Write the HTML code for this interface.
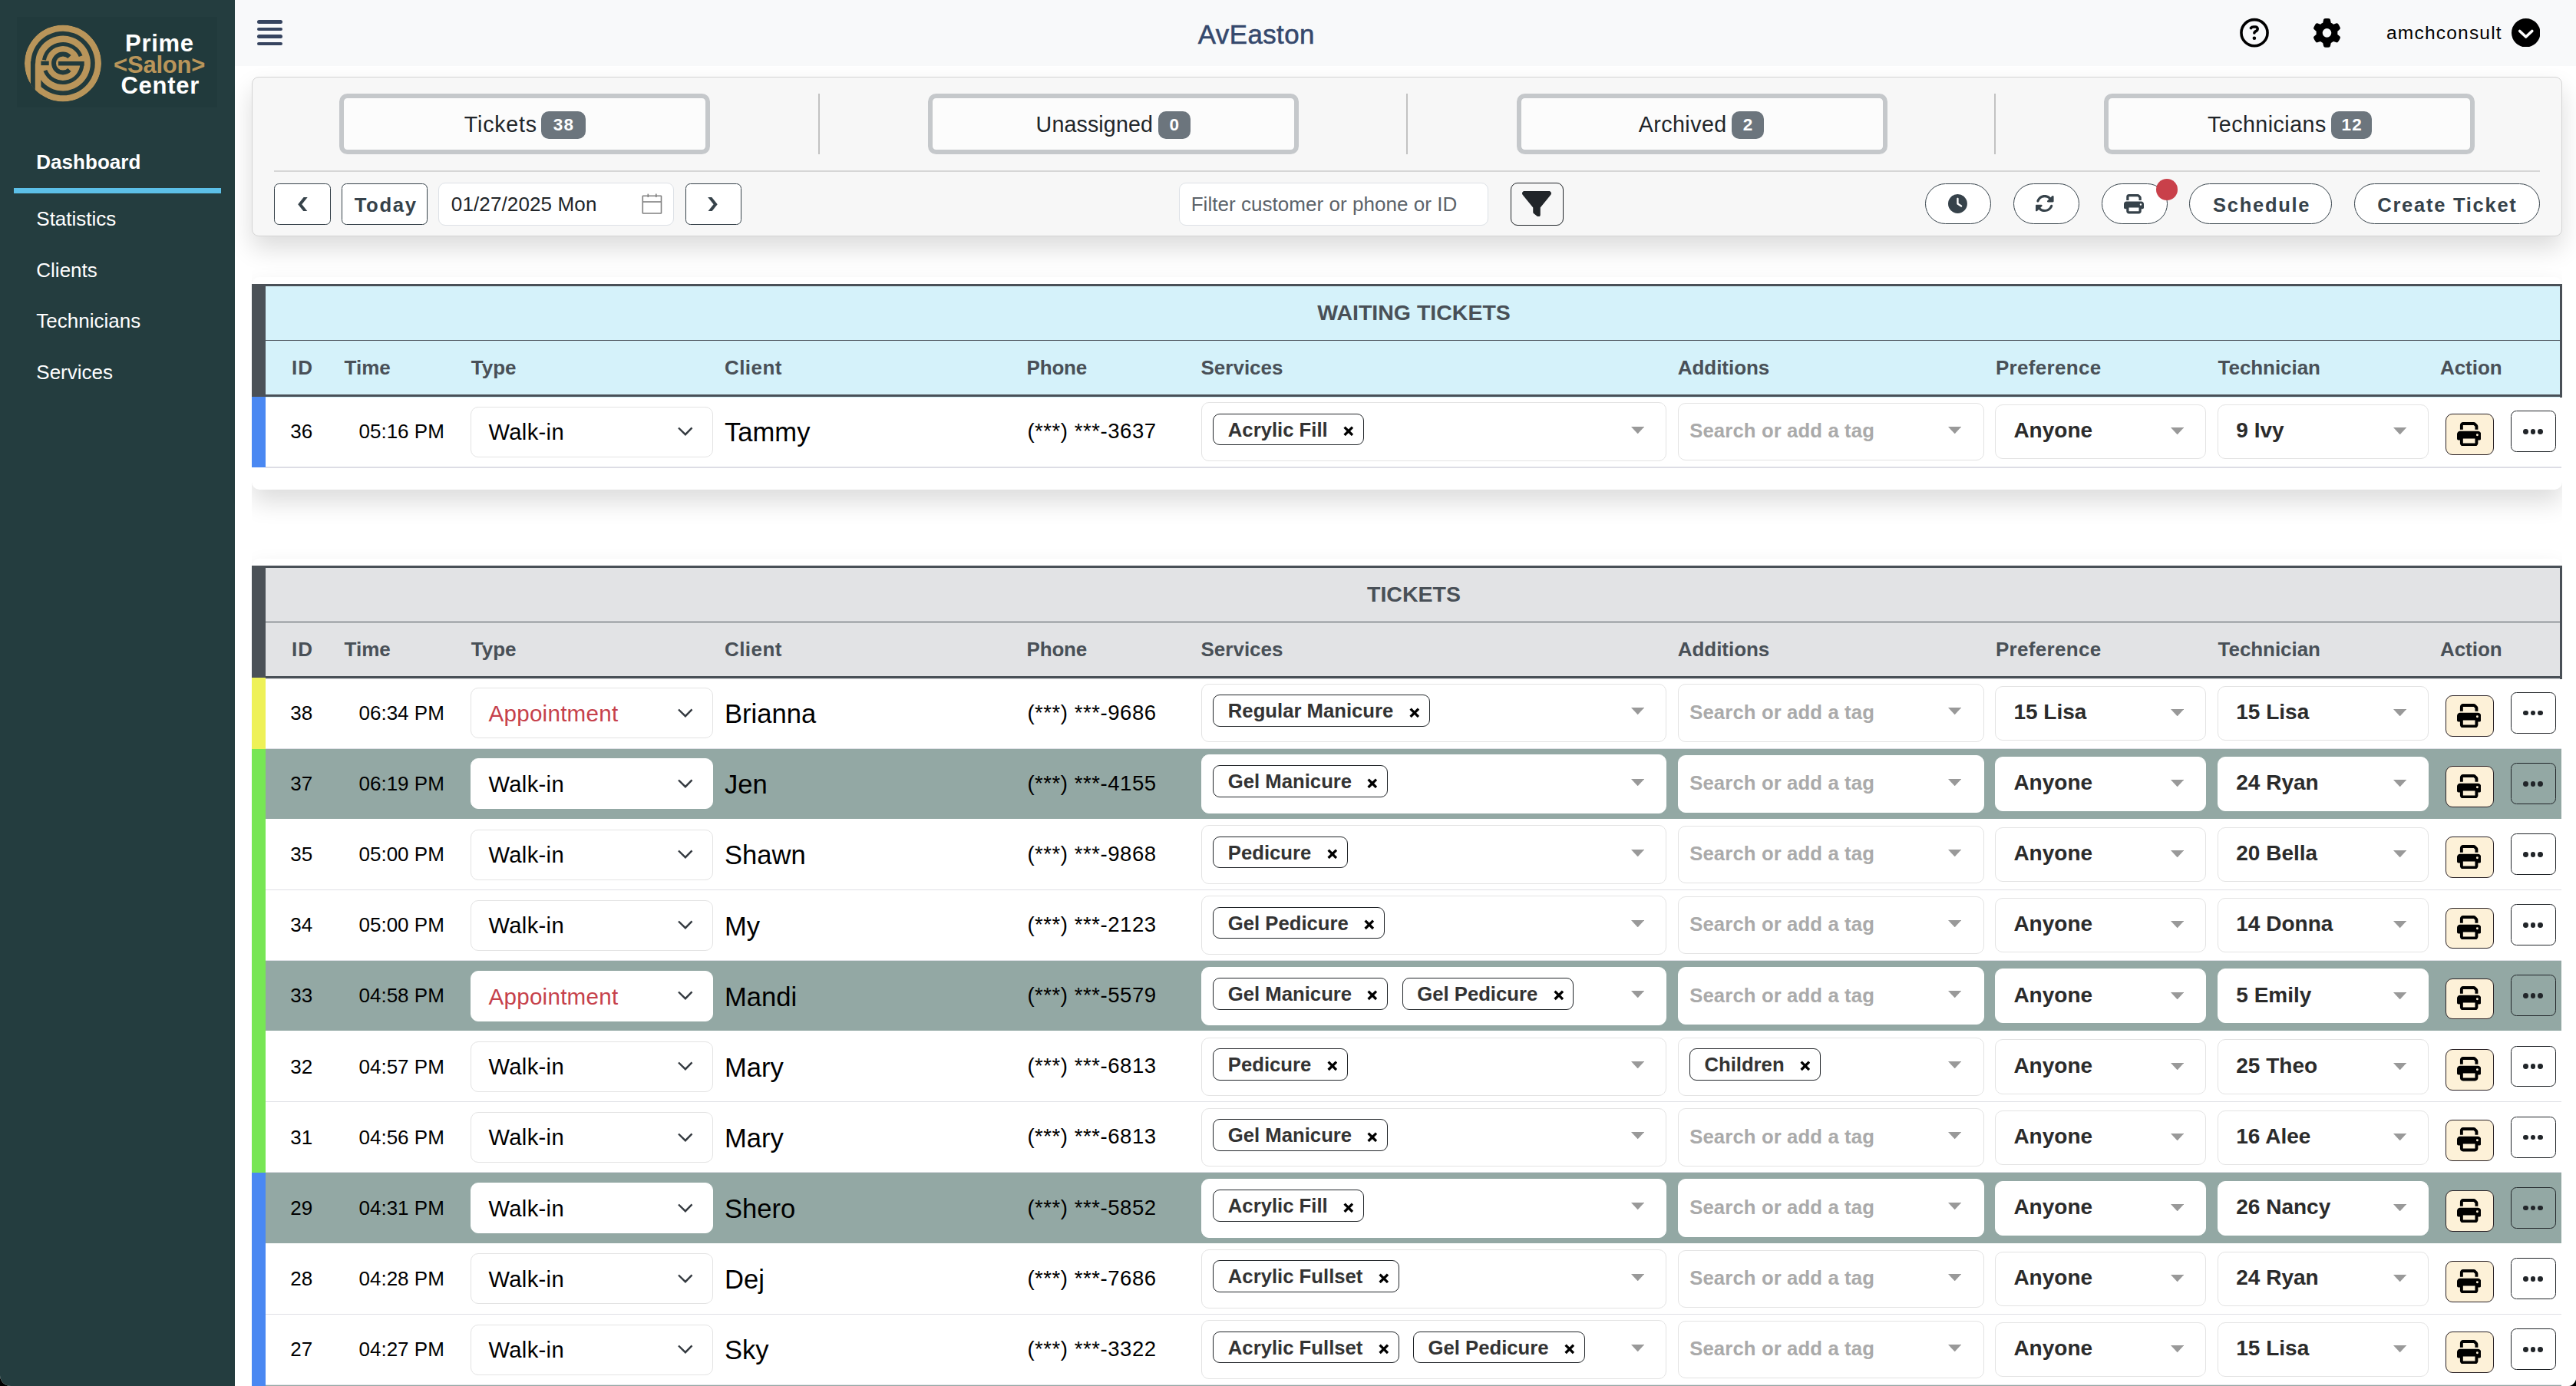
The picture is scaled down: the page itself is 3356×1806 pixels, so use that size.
<!DOCTYPE html>
<html><head><meta charset="utf-8"><title>Dashboard</title>
<style>
html,body{margin:0;padding:0;width:3356px;height:1806px;overflow:hidden;background:#000}
body{position:relative;font-family:"Liberation Sans",sans-serif}
#win div,#win svg,body>div{position:absolute}
.t{white-space:pre}
</style></head><body>
<div style="left:0;top:0;width:3356px;height:1806px;background:#000"></div>
<div style="left:0;top:0;width:3356px;height:1806px;background:#fff;border-radius:0 0 11px 14px;overflow:hidden" id="win">
<div style="left:0.00px;top:0.00px;width:306.00px;height:1806.00px;background:#243d3f"></div>
<div style="left:22.00px;top:22.00px;width:261.00px;height:118.00px;background:#213a3c"></div>
<svg style="left:0.00px;top:0.00px;" width="160.00" height="160.00" viewBox="0 0 160 160" preserveAspectRatio="none"><defs><clipPath id="lc"><circle cx="82" cy="82.5" r="50"/></clipPath></defs><g clip-path="url(#lc)"><circle cx="82" cy="82.5" r="50" fill="#b9955a"/><path d="M43.15 82.50A38.85 38.85 0 1 1 48.35 101.92" fill="none" stroke="#213a3c" stroke-width="5.9"/><rect x="39.9" y="80" width="6" height="45" fill="#213a3c"/><rect x="45.9" y="84" width="7.5" height="45" fill="#b9955a"/><path d="M57.43 78.17A24.95 24.95 0 0 1 105.13 73.15" fill="none" stroke="#213a3c" stroke-width="5.1"/><rect x="53.4" y="79.6" width="10.3" height="5.5" fill="#213a3c"/><path d="M106.89 84.24A24.95 24.95 0 0 1 58.87 91.85" fill="none" stroke="#213a3c" stroke-width="5.1"/><path d="M90.49 90.99A12.0 12.0 0 1 1 90.49 74.01" fill="none" stroke="#213a3c" stroke-width="5.9"/><rect x="76" y="80" width="33.7" height="5.5" fill="#213a3c"/></g></svg>
<div class="t" style="left:163.00px;top:40.76px;font-size:31px;line-height:31px;color:#ffffff;font-weight:700;letter-spacing:0.700px;">Prime</div>
<div class="t" style="left:148.00px;top:68.76px;font-size:31px;line-height:31px;color:#b9955a;font-weight:700;letter-spacing:-0.200px;">&lt;Salon&gt;</div>
<div class="t" style="left:157.50px;top:95.76px;font-size:31px;line-height:31px;color:#ffffff;font-weight:700;letter-spacing:0.700px;">Center</div>
<div class="t" style="left:47.30px;top:197.99px;font-size:26px;line-height:26px;color:#ffffff;font-weight:700;letter-spacing:0.033px;">Dashboard</div>
<div style="left:18.00px;top:245.00px;width:270.00px;height:7.00px;background:#5cc0e8"></div>
<div class="t" style="left:47.30px;top:271.99px;font-size:26px;line-height:26px;color:#ffffff;font-weight:400;letter-spacing:0.000px;">Statistics</div>
<div class="t" style="left:47.30px;top:338.99px;font-size:26px;line-height:26px;color:#ffffff;font-weight:400;letter-spacing:0.000px;">Clients</div>
<div class="t" style="left:47.30px;top:404.99px;font-size:26px;line-height:26px;color:#ffffff;font-weight:400;letter-spacing:0.000px;">Technicians</div>
<div class="t" style="left:47.30px;top:471.99px;font-size:26px;line-height:26px;color:#ffffff;font-weight:400;letter-spacing:0.000px;">Services</div>
<div style="left:306.00px;top:0.00px;width:3050.00px;height:86.00px;background:#f8f9fa"></div>
<div style="left:335.00px;top:26.20px;width:33.00px;height:4.70px;background:#36445f;border-radius:3px"></div>
<div style="left:335.00px;top:35.70px;width:33.00px;height:4.70px;background:#36445f;border-radius:3px"></div>
<div style="left:335.00px;top:45.10px;width:33.00px;height:4.70px;background:#36445f;border-radius:3px"></div>
<div style="left:335.00px;top:54.60px;width:33.00px;height:4.70px;background:#36445f;border-radius:3px"></div>
<div class="t" style="left:1560.80px;top:27.74px;font-size:34.8px;line-height:34.8px;color:#35486c;font-weight:400;letter-spacing:0.467px;-webkit-text-stroke:0.6px #35486c">AvEaston</div>
<svg style="left:2917.00px;top:23.00px;" width="40.00" height="40.00" viewBox="0 0 40 40" preserveAspectRatio="none"><circle cx="20" cy="19.7" r="17.05" fill="none" stroke="#000" stroke-width="3.6"/><path d="M15.4 13.6C16.2 12.5 17.5 11.95 19 11.95H21.4C23 11.95 24.2 13.2 24.2 14.8C24.2 16 23.5 16.8 22.5 17.4L21 18.2C20.3 18.6 19.9 19.2 19.9 20" fill="none" stroke="#000" stroke-width="3.6" stroke-linecap="round" stroke-linejoin="round"/><circle cx="19.9" cy="26.75" r="2.3" fill="#000"/></svg>
<svg style="left:3012.50px;top:24.00px;" width="37.00" height="37.70" viewBox="0 0 512 512" preserveAspectRatio="none"><path d="M495.9 166.6c3.2 8.7 .5 18.4-6.4 24.6l-43.3 39.4c1.1 8.3 1.7 16.8 1.7 25.4s-.6 17.1-1.7 25.4l43.3 39.4c6.9 6.2 9.6 15.9 6.4 24.6c-4.4 11.9-9.7 23.3-15.8 34.3l-4.7 8.1c-6.6 11-14 21.4-22.1 31.2c-5.9 7.2-15.7 9.6-24.5 6.8l-55.7-17.700c-13.4 10.3-28.2 18.9-44 25.4l-12.5 57.1c-2 9.1-9 16.3-18.2 17.8c-13.8 2.3-28 3.5-42.5 3.5s-28.7-1.2-42.5-3.5c-9.2-1.5-16.2-8.7-18.2-17.8l-12.5-57.1c-15.8-6.5-30.6-15.1-44-25.4L83.1 425.9c-8.8 2.8-18.6 .3-24.5-6.8c-8.1-9.8-15.5-20.2-22.1-31.2l-4.7-8.1c-6.1-11-11.4-22.4-15.8-34.3c-3.2-8.7-.5-18.4 6.4-24.6l43.3-39.4C64.6 273.1 64 264.6 64 256s.6-17.1 1.7-25.4L22.4 191.2c-6.9-6.2-9.6-15.9-6.4-24.6c4.4-11.9 9.7-23.3 15.8-34.3l4.7-8.1c6.6-11 14-21.4 22.1-31.2c5.9-7.2 15.7-9.6 24.5-6.8l55.7 17.7c13.4-10.3 28.2-18.9 44-25.4l12.5-57.1c2-9.1 9-16.3 18.2-17.8C227.3 1.2 241.5 0 256 0s28.7 1.2 42.5 3.5c9.2 1.5 16.2 8.7 18.2 17.8l12.5 57.1c15.8 6.5 30.6 15.1 44 25.4l55.7-17.7c8.8-2.8 18.6-.3 24.5 6.8c8.1 9.8 15.5 20.2 22.1 31.2l4.7 8.1c6.1 11 11.4 22.4 15.8 34.3zM256 336a80 80 0 1 0 0-160 80 80 0 1 0 0 160z" fill="#000"/></svg>
<div class="t" style="left:3109.00px;top:31.46px;font-size:24.5px;line-height:24.5px;color:#000000;font-weight:400;letter-spacing:1.211px;">amchconsult</div>
<svg style="left:3271.90px;top:23.90px;" width="37.50" height="37.50" viewBox="0 0 37.5 37.5" preserveAspectRatio="none"><circle cx="18.75" cy="18.75" r="18.75" fill="#000"/><path d="M10.7 16.5L18.7 24L26.8 16.5" fill="none" stroke="#fff" stroke-width="3.6" stroke-linecap="round" stroke-linejoin="round"/></svg>
<div style="left:328.00px;top:100.00px;width:3010.00px;height:208.00px;background:#f7f7f7;border:1.5px solid #d4d4d4;border-radius:9px;box-sizing:border-box;box-shadow:0 16px 32px rgba(0,0,0,.14)"></div>
<div style="left:442.00px;top:122.00px;width:483.00px;height:79.00px;background:#fcfcfc;border:6.8px solid #c5c8cb;border-radius:10.5px;box-sizing:border-box"></div>
<div class="t" style="left:604.80px;top:148.09px;font-size:28.6px;line-height:28.6px;color:#212529;font-weight:400;letter-spacing:0.798px;">Tickets</div>
<div style="left:705.00px;top:145.00px;width:58.00px;height:36.00px;background:#6c757d;border-radius:10px"></div>
<div class="t" style="left:-265.50px;width:2000px;text-align:center;top:151.85px;font-size:22.5px;line-height:22.5px;color:#ffffff;font-weight:700;letter-spacing:1.200px;">38</div>
<div style="left:1209.00px;top:122.00px;width:483.00px;height:79.00px;background:#fcfcfc;border:6.8px solid #c5c8cb;border-radius:10.5px;box-sizing:border-box"></div>
<div class="t" style="left:1349.60px;top:148.09px;font-size:28.6px;line-height:28.6px;color:#212529;font-weight:400;letter-spacing:0.141px;">Unassigned</div>
<div style="left:1508.90px;top:145.00px;width:42.00px;height:36.00px;background:#6c757d;border-radius:10px"></div>
<div class="t" style="left:530.40px;width:2000px;text-align:center;top:151.85px;font-size:22.5px;line-height:22.5px;color:#ffffff;font-weight:700;letter-spacing:1.200px;">0</div>
<div style="left:1975.50px;top:122.00px;width:483.00px;height:79.00px;background:#fcfcfc;border:6.8px solid #c5c8cb;border-radius:10.5px;box-sizing:border-box"></div>
<div class="t" style="left:2134.70px;top:148.09px;font-size:28.6px;line-height:28.6px;color:#212529;font-weight:400;letter-spacing:0.463px;">Archived</div>
<div style="left:2256.00px;top:145.00px;width:42.00px;height:36.00px;background:#6c757d;border-radius:10px"></div>
<div class="t" style="left:1277.50px;width:2000px;text-align:center;top:151.85px;font-size:22.5px;line-height:22.5px;color:#ffffff;font-weight:700;letter-spacing:1.200px;">2</div>
<div style="left:2741.00px;top:122.00px;width:483.00px;height:79.00px;background:#fcfcfc;border:6.8px solid #c5c8cb;border-radius:10.5px;box-sizing:border-box"></div>
<div class="t" style="left:2876.00px;top:148.09px;font-size:28.6px;line-height:28.6px;color:#212529;font-weight:400;letter-spacing:0.488px;">Technicians</div>
<div style="left:3037.20px;top:145.00px;width:53.00px;height:36.00px;background:#6c757d;border-radius:10px"></div>
<div class="t" style="left:2064.20px;width:2000px;text-align:center;top:151.85px;font-size:22.5px;line-height:22.5px;color:#ffffff;font-weight:700;letter-spacing:1.200px;">12</div>
<div style="left:1066.00px;top:122.00px;width:2.00px;height:79.00px;background:#c2c2c2"></div>
<div style="left:1832.00px;top:122.00px;width:2.00px;height:79.00px;background:#c2c2c2"></div>
<div style="left:2598.00px;top:122.00px;width:2.00px;height:79.00px;background:#c2c2c2"></div>
<div style="left:357.00px;top:222.00px;width:2952.00px;height:1.60px;background:#d6d6d6"></div>
<div style="left:357.00px;top:239.00px;width:73.50px;height:53.50px;background:#fff;border:1.6px solid #36424a;border-radius:6.5px;box-sizing:border-box"></div>
<svg style="left:387.50px;top:256.80px;" width="13.00" height="18.50" viewBox="0 0 13 18.5" preserveAspectRatio="none"><polygon points="12.7,0 7.6,0 0.2,9.25 7.6,18.5 12.7,18.5 5.3,9.25" fill="#36424a"/></svg>
<div style="left:445.00px;top:239.00px;width:111.50px;height:53.50px;background:#fff;border:1.6px solid #36424a;border-radius:6.5px;box-sizing:border-box"></div>
<div class="t" style="left:461.70px;top:254.74px;font-size:25.7px;line-height:25.7px;color:#36424a;font-weight:700;letter-spacing:1.651px;">Today</div>
<div style="left:571.00px;top:238.00px;width:306.50px;height:56.00px;background:#fff;border:1.5px solid #dde1e6;border-radius:9px;box-sizing:border-box"></div>
<div class="t" style="left:587.80px;top:253.19px;font-size:26px;line-height:26px;color:#212529;font-weight:400;letter-spacing:0.126px;">01/27/2025 Mon</div>
<svg style="left:836.00px;top:252.00px;" width="27.00" height="27.00" viewBox="0 0 27 27" preserveAspectRatio="none"><rect x="1.3" y="3.3" width="24.2" height="22.7" fill="none" stroke="#808080" stroke-width="1.6" rx="0.5"/><line x1="1.3" y1="11" x2="25.5" y2="11" stroke="#808080" stroke-width="1.6"/><line x1="8.3" y1="0.6" x2="8.3" y2="5" stroke="#808080" stroke-width="1.6"/><line x1="18.8" y1="0.6" x2="18.8" y2="5" stroke="#808080" stroke-width="1.6"/></svg>
<div style="left:893.00px;top:239.00px;width:73.00px;height:53.50px;background:#fff;border:1.6px solid #36424a;border-radius:6.5px;box-sizing:border-box"></div>
<svg style="left:922.00px;top:256.80px;" width="13.00" height="18.50" viewBox="0 0 13 18.5" preserveAspectRatio="none"><polygon points="0.2,0 5.3,0 12.7,9.25 5.3,18.5 0.2,18.5 7.6,9.25" fill="#36424a"/></svg>
<div style="left:1535.70px;top:238.00px;width:403.00px;height:56.00px;background:#fff;border:1.5px solid #dde1e6;border-radius:9px;box-sizing:border-box"></div>
<div class="t" style="left:1551.70px;top:252.69px;font-size:26px;line-height:26px;color:#5c636a;font-weight:400;letter-spacing:0.042px;">Filter customer or phone or ID</div>
<div style="left:1968.00px;top:238.20px;width:68.80px;height:55.50px;border:1.8px solid #212529;border-radius:9px;box-sizing:border-box"></div>
<svg style="left:1983.00px;top:249.00px;" width="38.00" height="33.40" viewBox="0 32 512 448" preserveAspectRatio="none"><path d="M3.9 54.9C10.5 40.9 24.5 32 40 32H472c15.5 0 29.5 8.9 36.1 22.9s4.6 30.5-5.2 42.5L320 320.9V448c0 12.1-6.8 23.2-17.7 28.6s-23.8 4.3-33.5-3l-64-48c-8.1-6-12.8-15.5-12.8-25.6V320.9L9 97.3C-.7 85.4-2.8 68.8 3.9 54.9z" fill="#212529"/></svg>
<div style="left:2508.00px;top:239.00px;width:86.00px;height:53.40px;background:#fff;border:1.5px solid #36424a;border-radius:27px;box-sizing:border-box"></div>
<svg style="left:2537.90px;top:252.90px;" width="24.90" height="24.90" viewBox="0 0 512 512" preserveAspectRatio="none"><path d="M256 0a256 256 0 1 1 0 512A256 256 0 1 1 256 0zM232 120V256c0 8 4 15.5 10.7 20l96 64c11 7.4 25.9 4.4 33.3-6.7s4.4-25.9-6.7-33.3L280 243.2V120c0-13.3-10.7-24-24-24s-24 10.7-24 24z" fill="#36424a"/></svg>
<div style="left:2623.00px;top:239.00px;width:85.70px;height:53.40px;background:#fff;border:1.5px solid #36424a;border-radius:27px;box-sizing:border-box"></div>
<svg style="left:2652.40px;top:254.40px;" width="23.60" height="22.20" viewBox="16 30 480 452" preserveAspectRatio="none"><path d="M142.9 142.9c62.2-62.2 162.7-62.5 225.3-1L327 183c-6.9 6.9-8.9 17.2-5.2 26.2s12.5 14.8 22.200 14.8H463.5c0 0 0 0 0 0H472c13.3 0 24-10.7 24-24V72c0-9.7-5.8-18.5-14.8-22.2s-19.3-1.7-26.2 5.2L413.4 96.6c-87.6-86.5-228.7-86.2-315.8 1C73.2 122 55.6 150.7 44.8 181.4c-5.9 16.7 2.9 34.9 19.5 40.8s34.9-2.9 40.8-19.5c7.7-21.800 20.2-42.3 37.8-59.8zM16 312v7.6 .7V440c0 9.7 5.8 18.5 14.8 22.2s19.3 1.7 26.2-5.2l41.6-41.6c87.6 86.5 228.7 86.2 315.8-1c24.4-24.4 42.1-53.1 52.9-83.7c5.9-16.7-2.9-34.9-19.5-40.8s-34.9 2.9-40.8 19.5c-7.7 21.8-20.2 42.3-37.8 59.8c-62.2 62.2-162.7 62.5-225.3 1L185 329c6.9-6.9 8.9-17.2 5.2-26.2s-12.5-14.8-22.2-14.8H48.4h-.7H40c-13.3 0-24 10.7-24 24z" fill="#36424a"/></svg>
<div style="left:2738.00px;top:239.00px;width:86.00px;height:53.40px;background:#fff;border:1.5px solid #36424a;border-radius:27px;box-sizing:border-box"></div>
<svg style="left:2767.00px;top:253.00px;" width="26.00" height="25.50" viewBox="0 0 512 512" preserveAspectRatio="none"><path d="M128 0C92.7 0 64 28.7 64 64v96h64V64H354.7L384 93.3V160h64V93.3c0-17-6.7-33.3-18.7-45.3L400 18.7C388 6.7 371.7 0 354.7 0H128zM384 352v32 64H128V384 368 352H384zm64 32h32c17.7 0 32-14.3 32-32V256c0-35.3-28.7-64-64-64H64c-35.3 0-64 28.7-64 64v96c0 17.7 14.3 32 32 32H64v64c0 35.3 28.7 64 64 64H384c35.3 0 64-28.7 64-64V384zM432 248a24 24 0 1 1 0 48 24 24 0 1 1 0-48z" fill="#36424a"/></svg>
<div style="left:2808.6px;top:232.7px;width:28.6px;height:28.6px;border-radius:50%;background:#c9404a"></div>
<div style="left:2852.00px;top:239.00px;width:186.00px;height:53.40px;background:#fff;border:1.5px solid #36424a;border-radius:27px;box-sizing:border-box"></div>
<div class="t" style="left:2883.00px;top:254.91px;font-size:25.5px;line-height:25.5px;color:#36424a;font-weight:700;letter-spacing:1.738px;">Schedule</div>
<div style="left:3066.90px;top:239.00px;width:242.10px;height:53.40px;background:#fff;border:1.5px solid #36424a;border-radius:27px;box-sizing:border-box"></div>
<div class="t" style="left:3097.30px;top:254.61px;font-size:25.5px;line-height:25.5px;color:#36424a;font-weight:700;letter-spacing:1.736px;">Create Ticket</div>
<div style="left:328.00px;top:361.00px;width:3010.00px;height:277.00px;background:#fff;border-radius:10px;box-shadow:0 16px 32px rgba(0,0,0,.14)"></div>
<div style="left:328.00px;top:370.00px;width:3010.00px;height:147.50px;background:#d5f2fa"></div>
<div style="left:328.00px;top:370.00px;width:3010.00px;height:3.20px;background:#495057"></div>
<div style="left:346.00px;top:442.80px;width:2992.00px;height:1.20px;background:#495057"></div>
<div style="left:328.00px;top:513.90px;width:3010.00px;height:3.00px;background:#495057"></div>
<div style="left:328.00px;top:370.00px;width:18.00px;height:147.50px;background:#4b5157"></div>
<div style="left:3335.00px;top:370.00px;width:3.00px;height:147.50px;background:#495057"></div>
<div class="t" style="left:842.00px;width:2000px;text-align:center;top:393.37px;font-size:28.5px;line-height:28.5px;color:#495057;font-weight:700;letter-spacing:0.000px;">WAITING TICKETS</div>
<div class="t" style="left:380.00px;top:465.89px;font-size:26px;line-height:26px;color:#495057;font-weight:700;letter-spacing:1.080px;">ID</div>
<div class="t" style="left:448.60px;top:465.89px;font-size:26px;line-height:26px;color:#495057;font-weight:700;letter-spacing:0.000px;">Time</div>
<div class="t" style="left:613.80px;top:465.89px;font-size:26px;line-height:26px;color:#495057;font-weight:700;letter-spacing:0.000px;">Type</div>
<div class="t" style="left:944.00px;top:465.89px;font-size:26px;line-height:26px;color:#495057;font-weight:700;letter-spacing:0.429px;">Client</div>
<div class="t" style="left:1337.60px;top:465.89px;font-size:26px;line-height:26px;color:#495057;font-weight:700;letter-spacing:-0.193px;">Phone</div>
<div class="t" style="left:1564.50px;top:465.89px;font-size:26px;line-height:26px;color:#495057;font-weight:700;letter-spacing:0.000px;">Services</div>
<div class="t" style="left:2185.80px;top:465.89px;font-size:26px;line-height:26px;color:#495057;font-weight:700;letter-spacing:-0.049px;">Additions</div>
<div class="t" style="left:2599.90px;top:465.89px;font-size:26px;line-height:26px;color:#495057;font-weight:700;letter-spacing:0.329px;">Preference</div>
<div class="t" style="left:2889.60px;top:465.89px;font-size:26px;line-height:26px;color:#495057;font-weight:700;letter-spacing:-0.057px;">Technician</div>
<div class="t" style="left:3178.90px;top:465.89px;font-size:26px;line-height:26px;color:#495057;font-weight:700;letter-spacing:-0.022px;">Action</div>
<div style="left:346.00px;top:608.00px;width:2991.00px;height:1.00px;background:#dfe0e6"></div>
<div style="left:328.00px;top:517.20px;width:18.00px;height:91.60px;background:#4a88f2"></div>
<div class="t" style="left:378.30px;top:549.09px;font-size:26px;line-height:26px;color:#000;font-weight:400;letter-spacing:0.000px;">36</div>
<div class="t" style="left:467.50px;top:549.09px;font-size:26px;line-height:26px;color:#000;font-weight:400;letter-spacing:0.000px;">05:16 PM</div>
<div style="left:613.00px;top:529.50px;width:316.00px;height:66.00px;background:#fff;border:1.5px solid #e3e3e3;border-radius:10px;box-sizing:border-box"></div>
<div class="t" style="left:636.50px;top:548.78px;font-size:29.2px;line-height:29.2px;color:#000;font-weight:400;letter-spacing:0.320px;">Walk-in</div>
<svg style="left:882.60px;top:556.00px;" width="20.00" height="12.00" viewBox="0 0 20 12" preserveAspectRatio="none"><path d="M1 1.5L9.9 10.2L18.5 1.3" fill="none" stroke="#343a40" stroke-width="2.4"/></svg>
<div class="t" style="left:944.00px;top:546.41px;font-size:34.6px;line-height:34.6px;color:#000;font-weight:400;letter-spacing:0.000px;">Tammy</div>
<div class="t" style="left:1338.40px;top:547.82px;font-size:27.5px;line-height:27.5px;color:#000;font-weight:400;letter-spacing:0.553px;">(***) ***-3637</div>
<div style="left:1565.40px;top:524.20px;width:605.40px;height:76.60px;background:#fff;border:1.5px solid #e3e3e3;border-radius:10px;box-sizing:border-box"></div>
<div style="left:1580.40px;top:538.50px;width:196.52px;height:41.80px;background:#fff;border:1.5px solid #212529;border-radius:9px;box-sizing:border-box"></div>
<div class="t" style="left:1599.80px;top:547.54px;font-size:25.7px;line-height:25.7px;color:#333333;font-weight:700;letter-spacing:0.000px;">Acrylic Fill</div>
<svg style="left:1750.02px;top:554.90px;" width="13.60" height="13.60" viewBox="0 0 13.6 13.6" preserveAspectRatio="none"><path d="M1.6 1.6L12 12M12 1.6L1.6 12" stroke="#000" stroke-width="3.3" stroke-linecap="butt"/></svg>
<svg style="left:2124.70px;top:555.70px;" width="17.30" height="9.30" viewBox="0 0 17.3 9.3" preserveAspectRatio="none"><polygon points="0,0 17.3,0 8.65,9.3" fill="#999"/></svg>
<div style="left:2185.60px;top:524.70px;width:399.00px;height:75.40px;background:#fff;border:1.5px solid #e3e3e3;border-radius:10px;box-sizing:border-box"></div>
<div class="t" style="left:2201.20px;top:549.24px;font-size:25.7px;line-height:25.7px;color:#aaaaaa;font-weight:700;letter-spacing:0.125px;">Search or add a tag</div>
<svg style="left:2537.80px;top:555.70px;" width="17.30" height="9.30" viewBox="0 0 17.3 9.3" preserveAspectRatio="none"><polygon points="0,0 17.3,0 8.65,9.3" fill="#999"/></svg>
<div style="left:2599.30px;top:526.90px;width:274.30px;height:71.20px;background:#fff;border:1.5px solid #e3e3e3;border-radius:10px;box-sizing:border-box"></div>
<div class="t" style="left:2623.40px;top:547.30px;font-size:28px;line-height:28px;color:#2b2b2b;font-weight:700;letter-spacing:0.000px;">Anyone</div>
<svg style="left:2828.00px;top:557.20px;" width="17.30" height="9.30" viewBox="0 0 17.3 9.3" preserveAspectRatio="none"><polygon points="0,0 17.3,0 8.65,9.3" fill="#999"/></svg>
<div style="left:2889.20px;top:526.90px;width:274.50px;height:71.20px;background:#fff;border:1.5px solid #e3e3e3;border-radius:10px;box-sizing:border-box"></div>
<div class="t" style="left:2913.30px;top:547.30px;font-size:28px;line-height:28px;color:#2b2b2b;font-weight:700;letter-spacing:0.000px;">9 Ivy</div>
<svg style="left:3117.50px;top:557.20px;" width="17.30" height="9.30" viewBox="0 0 17.3 9.3" preserveAspectRatio="none"><polygon points="0,0 17.3,0 8.65,9.3" fill="#999"/></svg>
<div style="left:3186.20px;top:539.40px;width:62.60px;height:53.80px;background:#fdf1d8;border:1.5px solid #2a2226;border-radius:9px;box-sizing:border-box"></div>
<svg style="left:3201.20px;top:549.80px;" width="31.30" height="31.40" viewBox="0 0 512 512" preserveAspectRatio="none"><path d="M128 0C92.7 0 64 28.7 64 64v96h64V64H354.7L384 93.3V160h64V93.3c0-17-6.7-33.3-18.7-45.3L400 18.7C388 6.7 371.7 0 354.7 0H128zM384 352v32 64H128V384 368 352H384zm64 32h32c17.7 0 32-14.3 32-32V256c0-35.3-28.7-64-64-64H64c-35.3 0-64 28.7-64 64v96c0 17.7 14.3 32 32 32H64v64c0 35.3 28.7 64 64 64H384c35.3 0 64-28.7 64-64V384zM432 248a24 24 0 1 1 0 48 24 24 0 1 1 0-48z" fill="#000"/></svg>
<div style="left:3271.20px;top:535.10px;width:58.60px;height:53.90px;background:#fff;border:1.7px solid #212529;border-radius:7.5px;box-sizing:border-box"></div>
<div style="left:3286.80px;top:558.90px;width:6.8px;height:6.8px;border-radius:50%;background:#212529"></div>
<div style="left:3296.60px;top:558.90px;width:6.8px;height:6.8px;border-radius:50%;background:#212529"></div>
<div style="left:3306.40px;top:558.90px;width:6.8px;height:6.8px;border-radius:50%;background:#212529"></div>
<div style="left:346.00px;top:609.00px;width:2991.00px;height:1.00px;background:#dcdce4"></div>
<div style="left:328.00px;top:727.50px;width:3010.00px;height:1200.00px;background:#fff;border-radius:10px;box-shadow:0 16px 32px rgba(0,0,0,.14)"></div>
<div style="left:328.00px;top:737.00px;width:3010.00px;height:147.50px;background:#e2e3e5"></div>
<div style="left:328.00px;top:737.00px;width:3010.00px;height:3.20px;background:#495057"></div>
<div style="left:346.00px;top:809.80px;width:2992.00px;height:1.20px;background:#495057"></div>
<div style="left:328.00px;top:880.90px;width:3010.00px;height:3.00px;background:#495057"></div>
<div style="left:328.00px;top:737.00px;width:18.00px;height:147.50px;background:#4b5157"></div>
<div style="left:3335.00px;top:737.00px;width:3.00px;height:147.50px;background:#495057"></div>
<div class="t" style="left:842.00px;width:2000px;text-align:center;top:760.37px;font-size:28.5px;line-height:28.5px;color:#495057;font-weight:700;letter-spacing:0.000px;">TICKETS</div>
<div class="t" style="left:380.00px;top:832.89px;font-size:26px;line-height:26px;color:#495057;font-weight:700;letter-spacing:1.080px;">ID</div>
<div class="t" style="left:448.60px;top:832.89px;font-size:26px;line-height:26px;color:#495057;font-weight:700;letter-spacing:0.000px;">Time</div>
<div class="t" style="left:613.80px;top:832.89px;font-size:26px;line-height:26px;color:#495057;font-weight:700;letter-spacing:0.000px;">Type</div>
<div class="t" style="left:944.00px;top:832.89px;font-size:26px;line-height:26px;color:#495057;font-weight:700;letter-spacing:0.429px;">Client</div>
<div class="t" style="left:1337.60px;top:832.89px;font-size:26px;line-height:26px;color:#495057;font-weight:700;letter-spacing:-0.193px;">Phone</div>
<div class="t" style="left:1564.50px;top:832.89px;font-size:26px;line-height:26px;color:#495057;font-weight:700;letter-spacing:0.000px;">Services</div>
<div class="t" style="left:2185.80px;top:832.89px;font-size:26px;line-height:26px;color:#495057;font-weight:700;letter-spacing:-0.049px;">Additions</div>
<div class="t" style="left:2599.90px;top:832.89px;font-size:26px;line-height:26px;color:#495057;font-weight:700;letter-spacing:0.329px;">Preference</div>
<div class="t" style="left:2889.60px;top:832.89px;font-size:26px;line-height:26px;color:#495057;font-weight:700;letter-spacing:-0.057px;">Technician</div>
<div class="t" style="left:3178.90px;top:832.89px;font-size:26px;line-height:26px;color:#495057;font-weight:700;letter-spacing:-0.022px;">Action</div>
<div style="left:346.00px;top:975.00px;width:2991.00px;height:1.00px;background:#dfe0e6"></div>
<div style="left:328.00px;top:883.40px;width:18.00px;height:92.15px;background:#eef157"></div>
<div class="t" style="left:378.30px;top:915.79px;font-size:26px;line-height:26px;color:#000;font-weight:400;letter-spacing:0.000px;">38</div>
<div class="t" style="left:467.50px;top:915.79px;font-size:26px;line-height:26px;color:#000;font-weight:400;letter-spacing:0.000px;">06:34 PM</div>
<div style="left:613.00px;top:896.20px;width:316.00px;height:66.00px;background:#fff;border:1.5px solid #e3e3e3;border-radius:10px;box-sizing:border-box"></div>
<div class="t" style="left:636.50px;top:915.14px;font-size:29.6px;line-height:29.6px;color:#c6414b;font-weight:400;letter-spacing:0.250px;">Appointment</div>
<svg style="left:882.60px;top:922.70px;" width="20.00" height="12.00" viewBox="0 0 20 12" preserveAspectRatio="none"><path d="M1 1.5L9.9 10.2L18.5 1.3" fill="none" stroke="#343a40" stroke-width="2.4"/></svg>
<div class="t" style="left:944.00px;top:913.11px;font-size:34.6px;line-height:34.6px;color:#000;font-weight:400;letter-spacing:0.000px;">Brianna</div>
<div class="t" style="left:1338.40px;top:914.52px;font-size:27.5px;line-height:27.5px;color:#000;font-weight:400;letter-spacing:0.553px;">(***) ***-9686</div>
<div style="left:1565.40px;top:890.90px;width:605.40px;height:76.60px;background:#fff;border:1.5px solid #e3e3e3;border-radius:10px;box-sizing:border-box"></div>
<div style="left:1580.40px;top:905.20px;width:282.15px;height:41.80px;background:#fff;border:1.5px solid #212529;border-radius:9px;box-sizing:border-box"></div>
<div class="t" style="left:1599.80px;top:914.24px;font-size:25.7px;line-height:25.7px;color:#333333;font-weight:700;letter-spacing:0.000px;">Regular Manicure</div>
<svg style="left:1835.65px;top:921.60px;" width="13.60" height="13.60" viewBox="0 0 13.6 13.6" preserveAspectRatio="none"><path d="M1.6 1.6L12 12M12 1.6L1.6 12" stroke="#000" stroke-width="3.3" stroke-linecap="butt"/></svg>
<svg style="left:2124.70px;top:922.40px;" width="17.30" height="9.30" viewBox="0 0 17.3 9.3" preserveAspectRatio="none"><polygon points="0,0 17.3,0 8.65,9.3" fill="#999"/></svg>
<div style="left:2185.60px;top:891.40px;width:399.00px;height:75.40px;background:#fff;border:1.5px solid #e3e3e3;border-radius:10px;box-sizing:border-box"></div>
<div class="t" style="left:2201.20px;top:915.94px;font-size:25.7px;line-height:25.7px;color:#aaaaaa;font-weight:700;letter-spacing:0.125px;">Search or add a tag</div>
<svg style="left:2537.80px;top:922.40px;" width="17.30" height="9.30" viewBox="0 0 17.3 9.3" preserveAspectRatio="none"><polygon points="0,0 17.3,0 8.65,9.3" fill="#999"/></svg>
<div style="left:2599.30px;top:893.60px;width:274.30px;height:71.20px;background:#fff;border:1.5px solid #e3e3e3;border-radius:10px;box-sizing:border-box"></div>
<div class="t" style="left:2623.40px;top:914.00px;font-size:28px;line-height:28px;color:#2b2b2b;font-weight:700;letter-spacing:0.000px;">15 Lisa</div>
<svg style="left:2828.00px;top:923.90px;" width="17.30" height="9.30" viewBox="0 0 17.3 9.3" preserveAspectRatio="none"><polygon points="0,0 17.3,0 8.65,9.3" fill="#999"/></svg>
<div style="left:2889.20px;top:893.60px;width:274.50px;height:71.20px;background:#fff;border:1.5px solid #e3e3e3;border-radius:10px;box-sizing:border-box"></div>
<div class="t" style="left:2913.30px;top:914.00px;font-size:28px;line-height:28px;color:#2b2b2b;font-weight:700;letter-spacing:0.000px;">15 Lisa</div>
<svg style="left:3117.50px;top:923.90px;" width="17.30" height="9.30" viewBox="0 0 17.3 9.3" preserveAspectRatio="none"><polygon points="0,0 17.3,0 8.65,9.3" fill="#999"/></svg>
<div style="left:3186.20px;top:906.10px;width:62.60px;height:53.80px;background:#fdf1d8;border:1.5px solid #2a2226;border-radius:9px;box-sizing:border-box"></div>
<svg style="left:3201.20px;top:916.50px;" width="31.30" height="31.40" viewBox="0 0 512 512" preserveAspectRatio="none"><path d="M128 0C92.7 0 64 28.7 64 64v96h64V64H354.7L384 93.3V160h64V93.3c0-17-6.7-33.3-18.7-45.3L400 18.7C388 6.7 371.7 0 354.7 0H128zM384 352v32 64H128V384 368 352H384zm64 32h32c17.7 0 32-14.3 32-32V256c0-35.3-28.7-64-64-64H64c-35.3 0-64 28.7-64 64v96c0 17.7 14.3 32 32 32H64v64c0 35.3 28.7 64 64 64H384c35.3 0 64-28.7 64-64V384zM432 248a24 24 0 1 1 0 48 24 24 0 1 1 0-48z" fill="#000"/></svg>
<div style="left:3271.20px;top:901.80px;width:58.60px;height:53.90px;background:#fff;border:1.7px solid #212529;border-radius:7.5px;box-sizing:border-box"></div>
<div style="left:3286.80px;top:925.60px;width:6.8px;height:6.8px;border-radius:50%;background:#212529"></div>
<div style="left:3296.60px;top:925.60px;width:6.8px;height:6.8px;border-radius:50%;background:#212529"></div>
<div style="left:3306.40px;top:925.60px;width:6.8px;height:6.8px;border-radius:50%;background:#212529"></div>
<div style="left:346.00px;top:975.55px;width:2991.00px;height:91.40px;background:#93a8a4"></div>
<div style="left:328.00px;top:975.55px;width:18.00px;height:92.15px;background:#77e654"></div>
<div class="t" style="left:378.30px;top:1007.94px;font-size:26px;line-height:26px;color:#000;font-weight:400;letter-spacing:0.000px;">37</div>
<div class="t" style="left:467.50px;top:1007.94px;font-size:26px;line-height:26px;color:#000;font-weight:400;letter-spacing:0.000px;">06:19 PM</div>
<div style="left:613.00px;top:988.35px;width:316.00px;height:66.00px;background:#fff;border:1.5px solid #ffffff;border-radius:10px;box-sizing:border-box"></div>
<div class="t" style="left:636.50px;top:1007.63px;font-size:29.2px;line-height:29.2px;color:#000;font-weight:400;letter-spacing:0.320px;">Walk-in</div>
<svg style="left:882.60px;top:1014.85px;" width="20.00" height="12.00" viewBox="0 0 20 12" preserveAspectRatio="none"><path d="M1 1.5L9.9 10.2L18.5 1.3" fill="none" stroke="#343a40" stroke-width="2.4"/></svg>
<div class="t" style="left:944.00px;top:1005.26px;font-size:34.6px;line-height:34.6px;color:#000;font-weight:400;letter-spacing:0.000px;">Jen</div>
<div class="t" style="left:1338.40px;top:1006.67px;font-size:27.5px;line-height:27.5px;color:#000;font-weight:400;letter-spacing:0.553px;">(***) ***-4155</div>
<div style="left:1565.40px;top:983.05px;width:605.40px;height:76.60px;background:#fff;border:1.5px solid #ffffff;border-radius:10px;box-sizing:border-box"></div>
<div style="left:1580.40px;top:997.35px;width:227.91px;height:41.80px;background:#fff;border:1.5px solid #212529;border-radius:9px;box-sizing:border-box"></div>
<div class="t" style="left:1599.80px;top:1006.39px;font-size:25.7px;line-height:25.7px;color:#333333;font-weight:700;letter-spacing:0.000px;">Gel Manicure</div>
<svg style="left:1781.41px;top:1013.75px;" width="13.60" height="13.60" viewBox="0 0 13.6 13.6" preserveAspectRatio="none"><path d="M1.6 1.6L12 12M12 1.6L1.6 12" stroke="#000" stroke-width="3.3" stroke-linecap="butt"/></svg>
<svg style="left:2124.70px;top:1014.55px;" width="17.30" height="9.30" viewBox="0 0 17.3 9.3" preserveAspectRatio="none"><polygon points="0,0 17.3,0 8.65,9.3" fill="#999"/></svg>
<div style="left:2185.60px;top:983.55px;width:399.00px;height:75.40px;background:#fff;border:1.5px solid #ffffff;border-radius:10px;box-sizing:border-box"></div>
<div class="t" style="left:2201.20px;top:1008.09px;font-size:25.7px;line-height:25.7px;color:#aaaaaa;font-weight:700;letter-spacing:0.125px;">Search or add a tag</div>
<svg style="left:2537.80px;top:1014.55px;" width="17.30" height="9.30" viewBox="0 0 17.3 9.3" preserveAspectRatio="none"><polygon points="0,0 17.3,0 8.65,9.3" fill="#999"/></svg>
<div style="left:2599.30px;top:985.75px;width:274.30px;height:71.20px;background:#fff;border:1.5px solid #ffffff;border-radius:10px;box-sizing:border-box"></div>
<div class="t" style="left:2623.40px;top:1006.15px;font-size:28px;line-height:28px;color:#2b2b2b;font-weight:700;letter-spacing:0.000px;">Anyone</div>
<svg style="left:2828.00px;top:1016.05px;" width="17.30" height="9.30" viewBox="0 0 17.3 9.3" preserveAspectRatio="none"><polygon points="0,0 17.3,0 8.65,9.3" fill="#999"/></svg>
<div style="left:2889.20px;top:985.75px;width:274.50px;height:71.20px;background:#fff;border:1.5px solid #ffffff;border-radius:10px;box-sizing:border-box"></div>
<div class="t" style="left:2913.30px;top:1006.15px;font-size:28px;line-height:28px;color:#2b2b2b;font-weight:700;letter-spacing:0.000px;">24 Ryan</div>
<svg style="left:3117.50px;top:1016.05px;" width="17.30" height="9.30" viewBox="0 0 17.3 9.3" preserveAspectRatio="none"><polygon points="0,0 17.3,0 8.65,9.3" fill="#999"/></svg>
<div style="left:3186.20px;top:998.25px;width:62.60px;height:53.80px;background:#fdf1d8;border:1.5px solid #2a2226;border-radius:9px;box-sizing:border-box"></div>
<svg style="left:3201.20px;top:1008.65px;" width="31.30" height="31.40" viewBox="0 0 512 512" preserveAspectRatio="none"><path d="M128 0C92.7 0 64 28.7 64 64v96h64V64H354.7L384 93.3V160h64V93.3c0-17-6.7-33.3-18.7-45.3L400 18.7C388 6.7 371.7 0 354.7 0H128zM384 352v32 64H128V384 368 352H384zm64 32h32c17.7 0 32-14.3 32-32V256c0-35.3-28.7-64-64-64H64c-35.3 0-64 28.7-64 64v96c0 17.7 14.3 32 32 32H64v64c0 35.3 28.7 64 64 64H384c35.3 0 64-28.7 64-64V384zM432 248a24 24 0 1 1 0 48 24 24 0 1 1 0-48z" fill="#000"/></svg>
<div style="left:3271.20px;top:993.95px;width:58.60px;height:53.90px;background:transparent;border:1.7px solid #212529;border-radius:7.5px;box-sizing:border-box"></div>
<div style="left:3286.80px;top:1017.75px;width:6.8px;height:6.8px;border-radius:50%;background:#212529"></div>
<div style="left:3296.60px;top:1017.75px;width:6.8px;height:6.8px;border-radius:50%;background:#212529"></div>
<div style="left:3306.40px;top:1017.75px;width:6.8px;height:6.8px;border-radius:50%;background:#212529"></div>
<div style="left:346.00px;top:1159.00px;width:2991.00px;height:1.00px;background:#dfe0e6"></div>
<div style="left:328.00px;top:1067.70px;width:18.00px;height:92.15px;background:#77e654"></div>
<div class="t" style="left:378.30px;top:1100.09px;font-size:26px;line-height:26px;color:#000;font-weight:400;letter-spacing:0.000px;">35</div>
<div class="t" style="left:467.50px;top:1100.09px;font-size:26px;line-height:26px;color:#000;font-weight:400;letter-spacing:0.000px;">05:00 PM</div>
<div style="left:613.00px;top:1080.50px;width:316.00px;height:66.00px;background:#fff;border:1.5px solid #e3e3e3;border-radius:10px;box-sizing:border-box"></div>
<div class="t" style="left:636.50px;top:1099.78px;font-size:29.2px;line-height:29.2px;color:#000;font-weight:400;letter-spacing:0.320px;">Walk-in</div>
<svg style="left:882.60px;top:1107.00px;" width="20.00" height="12.00" viewBox="0 0 20 12" preserveAspectRatio="none"><path d="M1 1.5L9.9 10.2L18.5 1.3" fill="none" stroke="#343a40" stroke-width="2.4"/></svg>
<div class="t" style="left:944.00px;top:1097.41px;font-size:34.6px;line-height:34.6px;color:#000;font-weight:400;letter-spacing:0.000px;">Shawn</div>
<div class="t" style="left:1338.40px;top:1098.82px;font-size:27.5px;line-height:27.5px;color:#000;font-weight:400;letter-spacing:0.553px;">(***) ***-9868</div>
<div style="left:1565.40px;top:1075.20px;width:605.40px;height:76.60px;background:#fff;border:1.5px solid #e3e3e3;border-radius:10px;box-sizing:border-box"></div>
<div style="left:1580.40px;top:1089.50px;width:175.12px;height:41.80px;background:#fff;border:1.5px solid #212529;border-radius:9px;box-sizing:border-box"></div>
<div class="t" style="left:1599.80px;top:1098.54px;font-size:25.7px;line-height:25.7px;color:#333333;font-weight:700;letter-spacing:0.000px;">Pedicure</div>
<svg style="left:1728.62px;top:1105.90px;" width="13.60" height="13.60" viewBox="0 0 13.6 13.6" preserveAspectRatio="none"><path d="M1.6 1.6L12 12M12 1.6L1.6 12" stroke="#000" stroke-width="3.3" stroke-linecap="butt"/></svg>
<svg style="left:2124.70px;top:1106.70px;" width="17.30" height="9.30" viewBox="0 0 17.3 9.3" preserveAspectRatio="none"><polygon points="0,0 17.3,0 8.65,9.3" fill="#999"/></svg>
<div style="left:2185.60px;top:1075.70px;width:399.00px;height:75.40px;background:#fff;border:1.5px solid #e3e3e3;border-radius:10px;box-sizing:border-box"></div>
<div class="t" style="left:2201.20px;top:1100.24px;font-size:25.7px;line-height:25.7px;color:#aaaaaa;font-weight:700;letter-spacing:0.125px;">Search or add a tag</div>
<svg style="left:2537.80px;top:1106.70px;" width="17.30" height="9.30" viewBox="0 0 17.3 9.3" preserveAspectRatio="none"><polygon points="0,0 17.3,0 8.65,9.3" fill="#999"/></svg>
<div style="left:2599.30px;top:1077.90px;width:274.30px;height:71.20px;background:#fff;border:1.5px solid #e3e3e3;border-radius:10px;box-sizing:border-box"></div>
<div class="t" style="left:2623.40px;top:1098.30px;font-size:28px;line-height:28px;color:#2b2b2b;font-weight:700;letter-spacing:0.000px;">Anyone</div>
<svg style="left:2828.00px;top:1108.20px;" width="17.30" height="9.30" viewBox="0 0 17.3 9.3" preserveAspectRatio="none"><polygon points="0,0 17.3,0 8.65,9.3" fill="#999"/></svg>
<div style="left:2889.20px;top:1077.90px;width:274.50px;height:71.20px;background:#fff;border:1.5px solid #e3e3e3;border-radius:10px;box-sizing:border-box"></div>
<div class="t" style="left:2913.30px;top:1098.30px;font-size:28px;line-height:28px;color:#2b2b2b;font-weight:700;letter-spacing:0.000px;">20 Bella</div>
<svg style="left:3117.50px;top:1108.20px;" width="17.30" height="9.30" viewBox="0 0 17.3 9.3" preserveAspectRatio="none"><polygon points="0,0 17.3,0 8.65,9.3" fill="#999"/></svg>
<div style="left:3186.20px;top:1090.40px;width:62.60px;height:53.80px;background:#fdf1d8;border:1.5px solid #2a2226;border-radius:9px;box-sizing:border-box"></div>
<svg style="left:3201.20px;top:1100.80px;" width="31.30" height="31.40" viewBox="0 0 512 512" preserveAspectRatio="none"><path d="M128 0C92.7 0 64 28.7 64 64v96h64V64H354.7L384 93.3V160h64V93.3c0-17-6.7-33.3-18.7-45.3L400 18.7C388 6.7 371.7 0 354.7 0H128zM384 352v32 64H128V384 368 352H384zm64 32h32c17.7 0 32-14.3 32-32V256c0-35.3-28.7-64-64-64H64c-35.3 0-64 28.7-64 64v96c0 17.7 14.3 32 32 32H64v64c0 35.3 28.7 64 64 64H384c35.3 0 64-28.7 64-64V384zM432 248a24 24 0 1 1 0 48 24 24 0 1 1 0-48z" fill="#000"/></svg>
<div style="left:3271.20px;top:1086.10px;width:58.60px;height:53.90px;background:#fff;border:1.7px solid #212529;border-radius:7.5px;box-sizing:border-box"></div>
<div style="left:3286.80px;top:1109.90px;width:6.8px;height:6.8px;border-radius:50%;background:#212529"></div>
<div style="left:3296.60px;top:1109.90px;width:6.8px;height:6.8px;border-radius:50%;background:#212529"></div>
<div style="left:3306.40px;top:1109.90px;width:6.8px;height:6.8px;border-radius:50%;background:#212529"></div>
<div style="left:346.00px;top:1251.00px;width:2991.00px;height:1.00px;background:#dfe0e6"></div>
<div style="left:328.00px;top:1159.85px;width:18.00px;height:92.15px;background:#77e654"></div>
<div class="t" style="left:378.30px;top:1192.24px;font-size:26px;line-height:26px;color:#000;font-weight:400;letter-spacing:0.000px;">34</div>
<div class="t" style="left:467.50px;top:1192.24px;font-size:26px;line-height:26px;color:#000;font-weight:400;letter-spacing:0.000px;">05:00 PM</div>
<div style="left:613.00px;top:1172.65px;width:316.00px;height:66.00px;background:#fff;border:1.5px solid #e3e3e3;border-radius:10px;box-sizing:border-box"></div>
<div class="t" style="left:636.50px;top:1191.93px;font-size:29.2px;line-height:29.2px;color:#000;font-weight:400;letter-spacing:0.320px;">Walk-in</div>
<svg style="left:882.60px;top:1199.15px;" width="20.00" height="12.00" viewBox="0 0 20 12" preserveAspectRatio="none"><path d="M1 1.5L9.9 10.2L18.5 1.3" fill="none" stroke="#343a40" stroke-width="2.4"/></svg>
<div class="t" style="left:944.00px;top:1189.56px;font-size:34.6px;line-height:34.6px;color:#000;font-weight:400;letter-spacing:0.000px;">My</div>
<div class="t" style="left:1338.40px;top:1190.97px;font-size:27.5px;line-height:27.5px;color:#000;font-weight:400;letter-spacing:0.553px;">(***) ***-2123</div>
<div style="left:1565.40px;top:1167.35px;width:605.40px;height:76.60px;background:#fff;border:1.5px solid #e3e3e3;border-radius:10px;box-sizing:border-box"></div>
<div style="left:1580.40px;top:1181.65px;width:223.66px;height:41.80px;background:#fff;border:1.5px solid #212529;border-radius:9px;box-sizing:border-box"></div>
<div class="t" style="left:1599.80px;top:1190.69px;font-size:25.7px;line-height:25.7px;color:#333333;font-weight:700;letter-spacing:0.000px;">Gel Pedicure</div>
<svg style="left:1777.16px;top:1198.05px;" width="13.60" height="13.60" viewBox="0 0 13.6 13.6" preserveAspectRatio="none"><path d="M1.6 1.6L12 12M12 1.6L1.6 12" stroke="#000" stroke-width="3.3" stroke-linecap="butt"/></svg>
<svg style="left:2124.70px;top:1198.85px;" width="17.30" height="9.30" viewBox="0 0 17.3 9.3" preserveAspectRatio="none"><polygon points="0,0 17.3,0 8.65,9.3" fill="#999"/></svg>
<div style="left:2185.60px;top:1167.85px;width:399.00px;height:75.40px;background:#fff;border:1.5px solid #e3e3e3;border-radius:10px;box-sizing:border-box"></div>
<div class="t" style="left:2201.20px;top:1192.39px;font-size:25.7px;line-height:25.7px;color:#aaaaaa;font-weight:700;letter-spacing:0.125px;">Search or add a tag</div>
<svg style="left:2537.80px;top:1198.85px;" width="17.30" height="9.30" viewBox="0 0 17.3 9.3" preserveAspectRatio="none"><polygon points="0,0 17.3,0 8.65,9.3" fill="#999"/></svg>
<div style="left:2599.30px;top:1170.05px;width:274.30px;height:71.20px;background:#fff;border:1.5px solid #e3e3e3;border-radius:10px;box-sizing:border-box"></div>
<div class="t" style="left:2623.40px;top:1190.45px;font-size:28px;line-height:28px;color:#2b2b2b;font-weight:700;letter-spacing:0.000px;">Anyone</div>
<svg style="left:2828.00px;top:1200.35px;" width="17.30" height="9.30" viewBox="0 0 17.3 9.3" preserveAspectRatio="none"><polygon points="0,0 17.3,0 8.65,9.3" fill="#999"/></svg>
<div style="left:2889.20px;top:1170.05px;width:274.50px;height:71.20px;background:#fff;border:1.5px solid #e3e3e3;border-radius:10px;box-sizing:border-box"></div>
<div class="t" style="left:2913.30px;top:1190.45px;font-size:28px;line-height:28px;color:#2b2b2b;font-weight:700;letter-spacing:0.000px;">14 Donna</div>
<svg style="left:3117.50px;top:1200.35px;" width="17.30" height="9.30" viewBox="0 0 17.3 9.3" preserveAspectRatio="none"><polygon points="0,0 17.3,0 8.65,9.3" fill="#999"/></svg>
<div style="left:3186.20px;top:1182.55px;width:62.60px;height:53.80px;background:#fdf1d8;border:1.5px solid #2a2226;border-radius:9px;box-sizing:border-box"></div>
<svg style="left:3201.20px;top:1192.95px;" width="31.30" height="31.40" viewBox="0 0 512 512" preserveAspectRatio="none"><path d="M128 0C92.7 0 64 28.7 64 64v96h64V64H354.7L384 93.3V160h64V93.3c0-17-6.7-33.3-18.7-45.3L400 18.7C388 6.7 371.7 0 354.7 0H128zM384 352v32 64H128V384 368 352H384zm64 32h32c17.7 0 32-14.3 32-32V256c0-35.3-28.7-64-64-64H64c-35.3 0-64 28.7-64 64v96c0 17.7 14.3 32 32 32H64v64c0 35.3 28.7 64 64 64H384c35.3 0 64-28.7 64-64V384zM432 248a24 24 0 1 1 0 48 24 24 0 1 1 0-48z" fill="#000"/></svg>
<div style="left:3271.20px;top:1178.25px;width:58.60px;height:53.90px;background:#fff;border:1.7px solid #212529;border-radius:7.5px;box-sizing:border-box"></div>
<div style="left:3286.80px;top:1202.05px;width:6.8px;height:6.8px;border-radius:50%;background:#212529"></div>
<div style="left:3296.60px;top:1202.05px;width:6.8px;height:6.8px;border-radius:50%;background:#212529"></div>
<div style="left:3306.40px;top:1202.05px;width:6.8px;height:6.8px;border-radius:50%;background:#212529"></div>
<div style="left:346.00px;top:1252.00px;width:2991.00px;height:91.40px;background:#93a8a4"></div>
<div style="left:328.00px;top:1252.00px;width:18.00px;height:92.15px;background:#77e654"></div>
<div class="t" style="left:378.30px;top:1284.39px;font-size:26px;line-height:26px;color:#000;font-weight:400;letter-spacing:0.000px;">33</div>
<div class="t" style="left:467.50px;top:1284.39px;font-size:26px;line-height:26px;color:#000;font-weight:400;letter-spacing:0.000px;">04:58 PM</div>
<div style="left:613.00px;top:1264.80px;width:316.00px;height:66.00px;background:#fff;border:1.5px solid #ffffff;border-radius:10px;box-sizing:border-box"></div>
<div class="t" style="left:636.50px;top:1283.74px;font-size:29.6px;line-height:29.6px;color:#c6414b;font-weight:400;letter-spacing:0.250px;">Appointment</div>
<svg style="left:882.60px;top:1291.30px;" width="20.00" height="12.00" viewBox="0 0 20 12" preserveAspectRatio="none"><path d="M1 1.5L9.9 10.2L18.5 1.3" fill="none" stroke="#343a40" stroke-width="2.4"/></svg>
<div class="t" style="left:944.00px;top:1281.71px;font-size:34.6px;line-height:34.6px;color:#000;font-weight:400;letter-spacing:0.000px;">Mandi</div>
<div class="t" style="left:1338.40px;top:1283.12px;font-size:27.5px;line-height:27.5px;color:#000;font-weight:400;letter-spacing:0.553px;">(***) ***-5579</div>
<div style="left:1565.40px;top:1259.50px;width:605.40px;height:76.60px;background:#fff;border:1.5px solid #ffffff;border-radius:10px;box-sizing:border-box"></div>
<div style="left:1580.40px;top:1273.80px;width:227.91px;height:41.80px;background:#fff;border:1.5px solid #212529;border-radius:9px;box-sizing:border-box"></div>
<div class="t" style="left:1599.80px;top:1282.84px;font-size:25.7px;line-height:25.7px;color:#333333;font-weight:700;letter-spacing:0.000px;">Gel Manicure</div>
<svg style="left:1781.41px;top:1290.20px;" width="13.60" height="13.60" viewBox="0 0 13.6 13.6" preserveAspectRatio="none"><path d="M1.6 1.6L12 12M12 1.6L1.6 12" stroke="#000" stroke-width="3.3" stroke-linecap="butt"/></svg>
<div style="left:1826.81px;top:1273.80px;width:223.66px;height:41.80px;background:#fff;border:1.5px solid #212529;border-radius:9px;box-sizing:border-box"></div>
<div class="t" style="left:1846.21px;top:1282.84px;font-size:25.7px;line-height:25.7px;color:#333333;font-weight:700;letter-spacing:0.000px;">Gel Pedicure</div>
<svg style="left:2023.57px;top:1290.20px;" width="13.60" height="13.60" viewBox="0 0 13.6 13.6" preserveAspectRatio="none"><path d="M1.6 1.6L12 12M12 1.6L1.6 12" stroke="#000" stroke-width="3.3" stroke-linecap="butt"/></svg>
<svg style="left:2124.70px;top:1291.00px;" width="17.30" height="9.30" viewBox="0 0 17.3 9.3" preserveAspectRatio="none"><polygon points="0,0 17.3,0 8.65,9.3" fill="#999"/></svg>
<div style="left:2185.60px;top:1260.00px;width:399.00px;height:75.40px;background:#fff;border:1.5px solid #ffffff;border-radius:10px;box-sizing:border-box"></div>
<div class="t" style="left:2201.20px;top:1284.54px;font-size:25.7px;line-height:25.7px;color:#aaaaaa;font-weight:700;letter-spacing:0.125px;">Search or add a tag</div>
<svg style="left:2537.80px;top:1291.00px;" width="17.30" height="9.30" viewBox="0 0 17.3 9.3" preserveAspectRatio="none"><polygon points="0,0 17.3,0 8.65,9.3" fill="#999"/></svg>
<div style="left:2599.30px;top:1262.20px;width:274.30px;height:71.20px;background:#fff;border:1.5px solid #ffffff;border-radius:10px;box-sizing:border-box"></div>
<div class="t" style="left:2623.40px;top:1282.60px;font-size:28px;line-height:28px;color:#2b2b2b;font-weight:700;letter-spacing:0.000px;">Anyone</div>
<svg style="left:2828.00px;top:1292.50px;" width="17.30" height="9.30" viewBox="0 0 17.3 9.3" preserveAspectRatio="none"><polygon points="0,0 17.3,0 8.65,9.3" fill="#999"/></svg>
<div style="left:2889.20px;top:1262.20px;width:274.50px;height:71.20px;background:#fff;border:1.5px solid #ffffff;border-radius:10px;box-sizing:border-box"></div>
<div class="t" style="left:2913.30px;top:1282.60px;font-size:28px;line-height:28px;color:#2b2b2b;font-weight:700;letter-spacing:0.000px;">5 Emily</div>
<svg style="left:3117.50px;top:1292.50px;" width="17.30" height="9.30" viewBox="0 0 17.3 9.3" preserveAspectRatio="none"><polygon points="0,0 17.3,0 8.65,9.3" fill="#999"/></svg>
<div style="left:3186.20px;top:1274.70px;width:62.60px;height:53.80px;background:#fdf1d8;border:1.5px solid #2a2226;border-radius:9px;box-sizing:border-box"></div>
<svg style="left:3201.20px;top:1285.10px;" width="31.30" height="31.40" viewBox="0 0 512 512" preserveAspectRatio="none"><path d="M128 0C92.7 0 64 28.7 64 64v96h64V64H354.7L384 93.3V160h64V93.3c0-17-6.7-33.3-18.7-45.3L400 18.7C388 6.7 371.7 0 354.7 0H128zM384 352v32 64H128V384 368 352H384zm64 32h32c17.7 0 32-14.3 32-32V256c0-35.3-28.7-64-64-64H64c-35.3 0-64 28.7-64 64v96c0 17.7 14.3 32 32 32H64v64c0 35.3 28.7 64 64 64H384c35.3 0 64-28.7 64-64V384zM432 248a24 24 0 1 1 0 48 24 24 0 1 1 0-48z" fill="#000"/></svg>
<div style="left:3271.20px;top:1270.40px;width:58.60px;height:53.90px;background:transparent;border:1.7px solid #212529;border-radius:7.5px;box-sizing:border-box"></div>
<div style="left:3286.80px;top:1294.20px;width:6.8px;height:6.8px;border-radius:50%;background:#212529"></div>
<div style="left:3296.60px;top:1294.20px;width:6.8px;height:6.8px;border-radius:50%;background:#212529"></div>
<div style="left:3306.40px;top:1294.20px;width:6.8px;height:6.8px;border-radius:50%;background:#212529"></div>
<div style="left:346.00px;top:1435.00px;width:2991.00px;height:1.00px;background:#dfe0e6"></div>
<div style="left:328.00px;top:1344.15px;width:18.00px;height:92.15px;background:#77e654"></div>
<div class="t" style="left:378.30px;top:1376.54px;font-size:26px;line-height:26px;color:#000;font-weight:400;letter-spacing:0.000px;">32</div>
<div class="t" style="left:467.50px;top:1376.54px;font-size:26px;line-height:26px;color:#000;font-weight:400;letter-spacing:0.000px;">04:57 PM</div>
<div style="left:613.00px;top:1356.95px;width:316.00px;height:66.00px;background:#fff;border:1.5px solid #e3e3e3;border-radius:10px;box-sizing:border-box"></div>
<div class="t" style="left:636.50px;top:1376.23px;font-size:29.2px;line-height:29.2px;color:#000;font-weight:400;letter-spacing:0.320px;">Walk-in</div>
<svg style="left:882.60px;top:1383.45px;" width="20.00" height="12.00" viewBox="0 0 20 12" preserveAspectRatio="none"><path d="M1 1.5L9.9 10.2L18.5 1.3" fill="none" stroke="#343a40" stroke-width="2.4"/></svg>
<div class="t" style="left:944.00px;top:1373.86px;font-size:34.6px;line-height:34.6px;color:#000;font-weight:400;letter-spacing:0.000px;">Mary</div>
<div class="t" style="left:1338.40px;top:1375.27px;font-size:27.5px;line-height:27.5px;color:#000;font-weight:400;letter-spacing:0.553px;">(***) ***-6813</div>
<div style="left:1565.40px;top:1351.65px;width:605.40px;height:76.60px;background:#fff;border:1.5px solid #e3e3e3;border-radius:10px;box-sizing:border-box"></div>
<div style="left:1580.40px;top:1365.95px;width:175.12px;height:41.80px;background:#fff;border:1.5px solid #212529;border-radius:9px;box-sizing:border-box"></div>
<div class="t" style="left:1599.80px;top:1374.99px;font-size:25.7px;line-height:25.7px;color:#333333;font-weight:700;letter-spacing:0.000px;">Pedicure</div>
<svg style="left:1728.62px;top:1382.35px;" width="13.60" height="13.60" viewBox="0 0 13.6 13.6" preserveAspectRatio="none"><path d="M1.6 1.6L12 12M12 1.6L1.6 12" stroke="#000" stroke-width="3.3" stroke-linecap="butt"/></svg>
<svg style="left:2124.70px;top:1383.15px;" width="17.30" height="9.30" viewBox="0 0 17.3 9.3" preserveAspectRatio="none"><polygon points="0,0 17.3,0 8.65,9.3" fill="#999"/></svg>
<div style="left:2185.60px;top:1352.15px;width:399.00px;height:75.40px;background:#fff;border:1.5px solid #e3e3e3;border-radius:10px;box-sizing:border-box"></div>
<div style="left:2201.00px;top:1365.95px;width:170.79px;height:41.80px;background:#fff;border:1.5px solid #212529;border-radius:9px;box-sizing:border-box"></div>
<div class="t" style="left:2220.40px;top:1374.99px;font-size:25.7px;line-height:25.7px;color:#333333;font-weight:700;letter-spacing:0.000px;">Children</div>
<svg style="left:2344.89px;top:1382.35px;" width="13.60" height="13.60" viewBox="0 0 13.6 13.6" preserveAspectRatio="none"><path d="M1.6 1.6L12 12M12 1.6L1.6 12" stroke="#000" stroke-width="3.3" stroke-linecap="butt"/></svg>
<svg style="left:2537.80px;top:1383.15px;" width="17.30" height="9.30" viewBox="0 0 17.3 9.3" preserveAspectRatio="none"><polygon points="0,0 17.3,0 8.65,9.3" fill="#999"/></svg>
<div style="left:2599.30px;top:1354.35px;width:274.30px;height:71.20px;background:#fff;border:1.5px solid #e3e3e3;border-radius:10px;box-sizing:border-box"></div>
<div class="t" style="left:2623.40px;top:1374.75px;font-size:28px;line-height:28px;color:#2b2b2b;font-weight:700;letter-spacing:0.000px;">Anyone</div>
<svg style="left:2828.00px;top:1384.65px;" width="17.30" height="9.30" viewBox="0 0 17.3 9.3" preserveAspectRatio="none"><polygon points="0,0 17.3,0 8.65,9.3" fill="#999"/></svg>
<div style="left:2889.20px;top:1354.35px;width:274.50px;height:71.20px;background:#fff;border:1.5px solid #e3e3e3;border-radius:10px;box-sizing:border-box"></div>
<div class="t" style="left:2913.30px;top:1374.75px;font-size:28px;line-height:28px;color:#2b2b2b;font-weight:700;letter-spacing:0.000px;">25 Theo</div>
<svg style="left:3117.50px;top:1384.65px;" width="17.30" height="9.30" viewBox="0 0 17.3 9.3" preserveAspectRatio="none"><polygon points="0,0 17.3,0 8.65,9.3" fill="#999"/></svg>
<div style="left:3186.20px;top:1366.85px;width:62.60px;height:53.80px;background:#fdf1d8;border:1.5px solid #2a2226;border-radius:9px;box-sizing:border-box"></div>
<svg style="left:3201.20px;top:1377.25px;" width="31.30" height="31.40" viewBox="0 0 512 512" preserveAspectRatio="none"><path d="M128 0C92.7 0 64 28.7 64 64v96h64V64H354.7L384 93.3V160h64V93.3c0-17-6.7-33.3-18.7-45.3L400 18.7C388 6.7 371.7 0 354.7 0H128zM384 352v32 64H128V384 368 352H384zm64 32h32c17.7 0 32-14.3 32-32V256c0-35.3-28.7-64-64-64H64c-35.3 0-64 28.7-64 64v96c0 17.7 14.3 32 32 32H64v64c0 35.3 28.7 64 64 64H384c35.3 0 64-28.7 64-64V384zM432 248a24 24 0 1 1 0 48 24 24 0 1 1 0-48z" fill="#000"/></svg>
<div style="left:3271.20px;top:1362.55px;width:58.60px;height:53.90px;background:#fff;border:1.7px solid #212529;border-radius:7.5px;box-sizing:border-box"></div>
<div style="left:3286.80px;top:1386.35px;width:6.8px;height:6.8px;border-radius:50%;background:#212529"></div>
<div style="left:3296.60px;top:1386.35px;width:6.8px;height:6.8px;border-radius:50%;background:#212529"></div>
<div style="left:3306.40px;top:1386.35px;width:6.8px;height:6.8px;border-radius:50%;background:#212529"></div>
<div style="left:346.00px;top:1527.00px;width:2991.00px;height:1.00px;background:#dfe0e6"></div>
<div style="left:328.00px;top:1436.30px;width:18.00px;height:92.15px;background:#77e654"></div>
<div class="t" style="left:378.30px;top:1468.69px;font-size:26px;line-height:26px;color:#000;font-weight:400;letter-spacing:0.000px;">31</div>
<div class="t" style="left:467.50px;top:1468.69px;font-size:26px;line-height:26px;color:#000;font-weight:400;letter-spacing:0.000px;">04:56 PM</div>
<div style="left:613.00px;top:1449.10px;width:316.00px;height:66.00px;background:#fff;border:1.5px solid #e3e3e3;border-radius:10px;box-sizing:border-box"></div>
<div class="t" style="left:636.50px;top:1468.38px;font-size:29.2px;line-height:29.2px;color:#000;font-weight:400;letter-spacing:0.320px;">Walk-in</div>
<svg style="left:882.60px;top:1475.60px;" width="20.00" height="12.00" viewBox="0 0 20 12" preserveAspectRatio="none"><path d="M1 1.5L9.9 10.2L18.5 1.3" fill="none" stroke="#343a40" stroke-width="2.4"/></svg>
<div class="t" style="left:944.00px;top:1466.01px;font-size:34.6px;line-height:34.6px;color:#000;font-weight:400;letter-spacing:0.000px;">Mary</div>
<div class="t" style="left:1338.40px;top:1467.42px;font-size:27.5px;line-height:27.5px;color:#000;font-weight:400;letter-spacing:0.553px;">(***) ***-6813</div>
<div style="left:1565.40px;top:1443.80px;width:605.40px;height:76.60px;background:#fff;border:1.5px solid #e3e3e3;border-radius:10px;box-sizing:border-box"></div>
<div style="left:1580.40px;top:1458.10px;width:227.91px;height:41.80px;background:#fff;border:1.5px solid #212529;border-radius:9px;box-sizing:border-box"></div>
<div class="t" style="left:1599.80px;top:1467.14px;font-size:25.7px;line-height:25.7px;color:#333333;font-weight:700;letter-spacing:0.000px;">Gel Manicure</div>
<svg style="left:1781.41px;top:1474.50px;" width="13.60" height="13.60" viewBox="0 0 13.6 13.6" preserveAspectRatio="none"><path d="M1.6 1.6L12 12M12 1.6L1.6 12" stroke="#000" stroke-width="3.3" stroke-linecap="butt"/></svg>
<svg style="left:2124.70px;top:1475.30px;" width="17.30" height="9.30" viewBox="0 0 17.3 9.3" preserveAspectRatio="none"><polygon points="0,0 17.3,0 8.65,9.3" fill="#999"/></svg>
<div style="left:2185.60px;top:1444.30px;width:399.00px;height:75.40px;background:#fff;border:1.5px solid #e3e3e3;border-radius:10px;box-sizing:border-box"></div>
<div class="t" style="left:2201.20px;top:1468.84px;font-size:25.7px;line-height:25.7px;color:#aaaaaa;font-weight:700;letter-spacing:0.125px;">Search or add a tag</div>
<svg style="left:2537.80px;top:1475.30px;" width="17.30" height="9.30" viewBox="0 0 17.3 9.3" preserveAspectRatio="none"><polygon points="0,0 17.3,0 8.65,9.3" fill="#999"/></svg>
<div style="left:2599.30px;top:1446.50px;width:274.30px;height:71.20px;background:#fff;border:1.5px solid #e3e3e3;border-radius:10px;box-sizing:border-box"></div>
<div class="t" style="left:2623.40px;top:1466.90px;font-size:28px;line-height:28px;color:#2b2b2b;font-weight:700;letter-spacing:0.000px;">Anyone</div>
<svg style="left:2828.00px;top:1476.80px;" width="17.30" height="9.30" viewBox="0 0 17.3 9.3" preserveAspectRatio="none"><polygon points="0,0 17.3,0 8.65,9.3" fill="#999"/></svg>
<div style="left:2889.20px;top:1446.50px;width:274.50px;height:71.20px;background:#fff;border:1.5px solid #e3e3e3;border-radius:10px;box-sizing:border-box"></div>
<div class="t" style="left:2913.30px;top:1466.90px;font-size:28px;line-height:28px;color:#2b2b2b;font-weight:700;letter-spacing:0.000px;">16 Alee</div>
<svg style="left:3117.50px;top:1476.80px;" width="17.30" height="9.30" viewBox="0 0 17.3 9.3" preserveAspectRatio="none"><polygon points="0,0 17.3,0 8.65,9.3" fill="#999"/></svg>
<div style="left:3186.20px;top:1459.00px;width:62.60px;height:53.80px;background:#fdf1d8;border:1.5px solid #2a2226;border-radius:9px;box-sizing:border-box"></div>
<svg style="left:3201.20px;top:1469.40px;" width="31.30" height="31.40" viewBox="0 0 512 512" preserveAspectRatio="none"><path d="M128 0C92.7 0 64 28.7 64 64v96h64V64H354.7L384 93.3V160h64V93.3c0-17-6.7-33.3-18.7-45.3L400 18.7C388 6.7 371.7 0 354.7 0H128zM384 352v32 64H128V384 368 352H384zm64 32h32c17.7 0 32-14.3 32-32V256c0-35.3-28.7-64-64-64H64c-35.3 0-64 28.7-64 64v96c0 17.7 14.3 32 32 32H64v64c0 35.3 28.7 64 64 64H384c35.3 0 64-28.7 64-64V384zM432 248a24 24 0 1 1 0 48 24 24 0 1 1 0-48z" fill="#000"/></svg>
<div style="left:3271.20px;top:1454.70px;width:58.60px;height:53.90px;background:#fff;border:1.7px solid #212529;border-radius:7.5px;box-sizing:border-box"></div>
<div style="left:3286.80px;top:1478.50px;width:6.8px;height:6.8px;border-radius:50%;background:#212529"></div>
<div style="left:3296.60px;top:1478.50px;width:6.8px;height:6.8px;border-radius:50%;background:#212529"></div>
<div style="left:3306.40px;top:1478.50px;width:6.8px;height:6.8px;border-radius:50%;background:#212529"></div>
<div style="left:346.00px;top:1528.45px;width:2991.00px;height:91.40px;background:#93a8a4"></div>
<div style="left:328.00px;top:1528.45px;width:18.00px;height:92.15px;background:#4a88f2"></div>
<div class="t" style="left:378.30px;top:1560.84px;font-size:26px;line-height:26px;color:#000;font-weight:400;letter-spacing:0.000px;">29</div>
<div class="t" style="left:467.50px;top:1560.84px;font-size:26px;line-height:26px;color:#000;font-weight:400;letter-spacing:0.000px;">04:31 PM</div>
<div style="left:613.00px;top:1541.25px;width:316.00px;height:66.00px;background:#fff;border:1.5px solid #ffffff;border-radius:10px;box-sizing:border-box"></div>
<div class="t" style="left:636.50px;top:1560.53px;font-size:29.2px;line-height:29.2px;color:#000;font-weight:400;letter-spacing:0.320px;">Walk-in</div>
<svg style="left:882.60px;top:1567.75px;" width="20.00" height="12.00" viewBox="0 0 20 12" preserveAspectRatio="none"><path d="M1 1.5L9.9 10.2L18.5 1.3" fill="none" stroke="#343a40" stroke-width="2.4"/></svg>
<div class="t" style="left:944.00px;top:1558.16px;font-size:34.6px;line-height:34.6px;color:#000;font-weight:400;letter-spacing:0.000px;">Shero</div>
<div class="t" style="left:1338.40px;top:1559.57px;font-size:27.5px;line-height:27.5px;color:#000;font-weight:400;letter-spacing:0.553px;">(***) ***-5852</div>
<div style="left:1565.40px;top:1535.95px;width:605.40px;height:76.60px;background:#fff;border:1.5px solid #ffffff;border-radius:10px;box-sizing:border-box"></div>
<div style="left:1580.40px;top:1550.25px;width:196.52px;height:41.80px;background:#fff;border:1.5px solid #212529;border-radius:9px;box-sizing:border-box"></div>
<div class="t" style="left:1599.80px;top:1559.29px;font-size:25.7px;line-height:25.7px;color:#333333;font-weight:700;letter-spacing:0.000px;">Acrylic Fill</div>
<svg style="left:1750.02px;top:1566.65px;" width="13.60" height="13.60" viewBox="0 0 13.6 13.6" preserveAspectRatio="none"><path d="M1.6 1.6L12 12M12 1.6L1.6 12" stroke="#000" stroke-width="3.3" stroke-linecap="butt"/></svg>
<svg style="left:2124.70px;top:1567.45px;" width="17.30" height="9.30" viewBox="0 0 17.3 9.3" preserveAspectRatio="none"><polygon points="0,0 17.3,0 8.65,9.3" fill="#999"/></svg>
<div style="left:2185.60px;top:1536.45px;width:399.00px;height:75.40px;background:#fff;border:1.5px solid #ffffff;border-radius:10px;box-sizing:border-box"></div>
<div class="t" style="left:2201.20px;top:1560.99px;font-size:25.7px;line-height:25.7px;color:#aaaaaa;font-weight:700;letter-spacing:0.125px;">Search or add a tag</div>
<svg style="left:2537.80px;top:1567.45px;" width="17.30" height="9.30" viewBox="0 0 17.3 9.3" preserveAspectRatio="none"><polygon points="0,0 17.3,0 8.65,9.3" fill="#999"/></svg>
<div style="left:2599.30px;top:1538.65px;width:274.30px;height:71.20px;background:#fff;border:1.5px solid #ffffff;border-radius:10px;box-sizing:border-box"></div>
<div class="t" style="left:2623.40px;top:1559.05px;font-size:28px;line-height:28px;color:#2b2b2b;font-weight:700;letter-spacing:0.000px;">Anyone</div>
<svg style="left:2828.00px;top:1568.95px;" width="17.30" height="9.30" viewBox="0 0 17.3 9.3" preserveAspectRatio="none"><polygon points="0,0 17.3,0 8.65,9.3" fill="#999"/></svg>
<div style="left:2889.20px;top:1538.65px;width:274.50px;height:71.20px;background:#fff;border:1.5px solid #ffffff;border-radius:10px;box-sizing:border-box"></div>
<div class="t" style="left:2913.30px;top:1559.05px;font-size:28px;line-height:28px;color:#2b2b2b;font-weight:700;letter-spacing:0.000px;">26 Nancy</div>
<svg style="left:3117.50px;top:1568.95px;" width="17.30" height="9.30" viewBox="0 0 17.3 9.3" preserveAspectRatio="none"><polygon points="0,0 17.3,0 8.65,9.3" fill="#999"/></svg>
<div style="left:3186.20px;top:1551.15px;width:62.60px;height:53.80px;background:#fdf1d8;border:1.5px solid #2a2226;border-radius:9px;box-sizing:border-box"></div>
<svg style="left:3201.20px;top:1561.55px;" width="31.30" height="31.40" viewBox="0 0 512 512" preserveAspectRatio="none"><path d="M128 0C92.7 0 64 28.7 64 64v96h64V64H354.7L384 93.3V160h64V93.3c0-17-6.7-33.3-18.7-45.3L400 18.7C388 6.7 371.7 0 354.7 0H128zM384 352v32 64H128V384 368 352H384zm64 32h32c17.7 0 32-14.3 32-32V256c0-35.3-28.7-64-64-64H64c-35.3 0-64 28.7-64 64v96c0 17.7 14.3 32 32 32H64v64c0 35.3 28.7 64 64 64H384c35.3 0 64-28.7 64-64V384zM432 248a24 24 0 1 1 0 48 24 24 0 1 1 0-48z" fill="#000"/></svg>
<div style="left:3271.20px;top:1546.85px;width:58.60px;height:53.90px;background:transparent;border:1.7px solid #212529;border-radius:7.5px;box-sizing:border-box"></div>
<div style="left:3286.80px;top:1570.65px;width:6.8px;height:6.8px;border-radius:50%;background:#212529"></div>
<div style="left:3296.60px;top:1570.65px;width:6.8px;height:6.8px;border-radius:50%;background:#212529"></div>
<div style="left:3306.40px;top:1570.65px;width:6.8px;height:6.8px;border-radius:50%;background:#212529"></div>
<div style="left:346.00px;top:1712.00px;width:2991.00px;height:1.00px;background:#dfe0e6"></div>
<div style="left:328.00px;top:1620.60px;width:18.00px;height:92.15px;background:#4a88f2"></div>
<div class="t" style="left:378.30px;top:1652.99px;font-size:26px;line-height:26px;color:#000;font-weight:400;letter-spacing:0.000px;">28</div>
<div class="t" style="left:467.50px;top:1652.99px;font-size:26px;line-height:26px;color:#000;font-weight:400;letter-spacing:0.000px;">04:28 PM</div>
<div style="left:613.00px;top:1633.40px;width:316.00px;height:66.00px;background:#fff;border:1.5px solid #e3e3e3;border-radius:10px;box-sizing:border-box"></div>
<div class="t" style="left:636.50px;top:1652.68px;font-size:29.2px;line-height:29.2px;color:#000;font-weight:400;letter-spacing:0.320px;">Walk-in</div>
<svg style="left:882.60px;top:1659.90px;" width="20.00" height="12.00" viewBox="0 0 20 12" preserveAspectRatio="none"><path d="M1 1.5L9.9 10.2L18.5 1.3" fill="none" stroke="#343a40" stroke-width="2.4"/></svg>
<div class="t" style="left:944.00px;top:1650.31px;font-size:34.6px;line-height:34.6px;color:#000;font-weight:400;letter-spacing:0.000px;">Dej</div>
<div class="t" style="left:1338.40px;top:1651.72px;font-size:27.5px;line-height:27.5px;color:#000;font-weight:400;letter-spacing:0.553px;">(***) ***-7686</div>
<div style="left:1565.40px;top:1628.10px;width:605.40px;height:76.60px;background:#fff;border:1.5px solid #e3e3e3;border-radius:10px;box-sizing:border-box"></div>
<div style="left:1580.40px;top:1642.40px;width:242.21px;height:41.80px;background:#fff;border:1.5px solid #212529;border-radius:9px;box-sizing:border-box"></div>
<div class="t" style="left:1599.80px;top:1651.44px;font-size:25.7px;line-height:25.7px;color:#333333;font-weight:700;letter-spacing:0.000px;">Acrylic Fullset</div>
<svg style="left:1795.71px;top:1658.80px;" width="13.60" height="13.60" viewBox="0 0 13.6 13.6" preserveAspectRatio="none"><path d="M1.6 1.6L12 12M12 1.6L1.6 12" stroke="#000" stroke-width="3.3" stroke-linecap="butt"/></svg>
<svg style="left:2124.70px;top:1659.60px;" width="17.30" height="9.30" viewBox="0 0 17.3 9.3" preserveAspectRatio="none"><polygon points="0,0 17.3,0 8.65,9.3" fill="#999"/></svg>
<div style="left:2185.60px;top:1628.60px;width:399.00px;height:75.40px;background:#fff;border:1.5px solid #e3e3e3;border-radius:10px;box-sizing:border-box"></div>
<div class="t" style="left:2201.20px;top:1653.14px;font-size:25.7px;line-height:25.7px;color:#aaaaaa;font-weight:700;letter-spacing:0.125px;">Search or add a tag</div>
<svg style="left:2537.80px;top:1659.60px;" width="17.30" height="9.30" viewBox="0 0 17.3 9.3" preserveAspectRatio="none"><polygon points="0,0 17.3,0 8.65,9.3" fill="#999"/></svg>
<div style="left:2599.30px;top:1630.80px;width:274.30px;height:71.20px;background:#fff;border:1.5px solid #e3e3e3;border-radius:10px;box-sizing:border-box"></div>
<div class="t" style="left:2623.40px;top:1651.20px;font-size:28px;line-height:28px;color:#2b2b2b;font-weight:700;letter-spacing:0.000px;">Anyone</div>
<svg style="left:2828.00px;top:1661.10px;" width="17.30" height="9.30" viewBox="0 0 17.3 9.3" preserveAspectRatio="none"><polygon points="0,0 17.3,0 8.65,9.3" fill="#999"/></svg>
<div style="left:2889.20px;top:1630.80px;width:274.50px;height:71.20px;background:#fff;border:1.5px solid #e3e3e3;border-radius:10px;box-sizing:border-box"></div>
<div class="t" style="left:2913.30px;top:1651.20px;font-size:28px;line-height:28px;color:#2b2b2b;font-weight:700;letter-spacing:0.000px;">24 Ryan</div>
<svg style="left:3117.50px;top:1661.10px;" width="17.30" height="9.30" viewBox="0 0 17.3 9.3" preserveAspectRatio="none"><polygon points="0,0 17.3,0 8.65,9.3" fill="#999"/></svg>
<div style="left:3186.20px;top:1643.30px;width:62.60px;height:53.80px;background:#fdf1d8;border:1.5px solid #2a2226;border-radius:9px;box-sizing:border-box"></div>
<svg style="left:3201.20px;top:1653.70px;" width="31.30" height="31.40" viewBox="0 0 512 512" preserveAspectRatio="none"><path d="M128 0C92.7 0 64 28.7 64 64v96h64V64H354.7L384 93.3V160h64V93.3c0-17-6.7-33.3-18.7-45.3L400 18.7C388 6.7 371.7 0 354.7 0H128zM384 352v32 64H128V384 368 352H384zm64 32h32c17.7 0 32-14.3 32-32V256c0-35.3-28.7-64-64-64H64c-35.3 0-64 28.7-64 64v96c0 17.7 14.3 32 32 32H64v64c0 35.3 28.7 64 64 64H384c35.3 0 64-28.7 64-64V384zM432 248a24 24 0 1 1 0 48 24 24 0 1 1 0-48z" fill="#000"/></svg>
<div style="left:3271.20px;top:1639.00px;width:58.60px;height:53.90px;background:#fff;border:1.7px solid #212529;border-radius:7.5px;box-sizing:border-box"></div>
<div style="left:3286.80px;top:1662.80px;width:6.8px;height:6.8px;border-radius:50%;background:#212529"></div>
<div style="left:3296.60px;top:1662.80px;width:6.8px;height:6.8px;border-radius:50%;background:#212529"></div>
<div style="left:3306.40px;top:1662.80px;width:6.8px;height:6.8px;border-radius:50%;background:#212529"></div>
<div style="left:346.00px;top:1804.00px;width:2991.00px;height:1.00px;background:#dfe0e6"></div>
<div style="left:328.00px;top:1712.75px;width:18.00px;height:92.15px;background:#4a88f2"></div>
<div class="t" style="left:378.30px;top:1745.14px;font-size:26px;line-height:26px;color:#000;font-weight:400;letter-spacing:0.000px;">27</div>
<div class="t" style="left:467.50px;top:1745.14px;font-size:26px;line-height:26px;color:#000;font-weight:400;letter-spacing:0.000px;">04:27 PM</div>
<div style="left:613.00px;top:1725.55px;width:316.00px;height:66.00px;background:#fff;border:1.5px solid #e3e3e3;border-radius:10px;box-sizing:border-box"></div>
<div class="t" style="left:636.50px;top:1744.83px;font-size:29.2px;line-height:29.2px;color:#000;font-weight:400;letter-spacing:0.320px;">Walk-in</div>
<svg style="left:882.60px;top:1752.05px;" width="20.00" height="12.00" viewBox="0 0 20 12" preserveAspectRatio="none"><path d="M1 1.5L9.9 10.2L18.5 1.3" fill="none" stroke="#343a40" stroke-width="2.4"/></svg>
<div class="t" style="left:944.00px;top:1742.46px;font-size:34.6px;line-height:34.6px;color:#000;font-weight:400;letter-spacing:0.000px;">Sky</div>
<div class="t" style="left:1338.40px;top:1743.87px;font-size:27.5px;line-height:27.5px;color:#000;font-weight:400;letter-spacing:0.553px;">(***) ***-3322</div>
<div style="left:1565.40px;top:1720.25px;width:605.40px;height:76.60px;background:#fff;border:1.5px solid #e3e3e3;border-radius:10px;box-sizing:border-box"></div>
<div style="left:1580.40px;top:1734.55px;width:242.21px;height:41.80px;background:#fff;border:1.5px solid #212529;border-radius:9px;box-sizing:border-box"></div>
<div class="t" style="left:1599.80px;top:1743.59px;font-size:25.7px;line-height:25.7px;color:#333333;font-weight:700;letter-spacing:0.000px;">Acrylic Fullset</div>
<svg style="left:1795.71px;top:1750.95px;" width="13.60" height="13.60" viewBox="0 0 13.6 13.6" preserveAspectRatio="none"><path d="M1.6 1.6L12 12M12 1.6L1.6 12" stroke="#000" stroke-width="3.3" stroke-linecap="butt"/></svg>
<div style="left:1841.11px;top:1734.55px;width:223.66px;height:41.80px;background:#fff;border:1.5px solid #212529;border-radius:9px;box-sizing:border-box"></div>
<div class="t" style="left:1860.51px;top:1743.59px;font-size:25.7px;line-height:25.7px;color:#333333;font-weight:700;letter-spacing:0.000px;">Gel Pedicure</div>
<svg style="left:2037.87px;top:1750.95px;" width="13.60" height="13.60" viewBox="0 0 13.6 13.6" preserveAspectRatio="none"><path d="M1.6 1.6L12 12M12 1.6L1.6 12" stroke="#000" stroke-width="3.3" stroke-linecap="butt"/></svg>
<svg style="left:2124.70px;top:1751.75px;" width="17.30" height="9.30" viewBox="0 0 17.3 9.3" preserveAspectRatio="none"><polygon points="0,0 17.3,0 8.65,9.3" fill="#999"/></svg>
<div style="left:2185.60px;top:1720.75px;width:399.00px;height:75.40px;background:#fff;border:1.5px solid #e3e3e3;border-radius:10px;box-sizing:border-box"></div>
<div class="t" style="left:2201.20px;top:1745.29px;font-size:25.7px;line-height:25.7px;color:#aaaaaa;font-weight:700;letter-spacing:0.125px;">Search or add a tag</div>
<svg style="left:2537.80px;top:1751.75px;" width="17.30" height="9.30" viewBox="0 0 17.3 9.3" preserveAspectRatio="none"><polygon points="0,0 17.3,0 8.65,9.3" fill="#999"/></svg>
<div style="left:2599.30px;top:1722.95px;width:274.30px;height:71.20px;background:#fff;border:1.5px solid #e3e3e3;border-radius:10px;box-sizing:border-box"></div>
<div class="t" style="left:2623.40px;top:1743.35px;font-size:28px;line-height:28px;color:#2b2b2b;font-weight:700;letter-spacing:0.000px;">Anyone</div>
<svg style="left:2828.00px;top:1753.25px;" width="17.30" height="9.30" viewBox="0 0 17.3 9.3" preserveAspectRatio="none"><polygon points="0,0 17.3,0 8.65,9.3" fill="#999"/></svg>
<div style="left:2889.20px;top:1722.95px;width:274.50px;height:71.20px;background:#fff;border:1.5px solid #e3e3e3;border-radius:10px;box-sizing:border-box"></div>
<div class="t" style="left:2913.30px;top:1743.35px;font-size:28px;line-height:28px;color:#2b2b2b;font-weight:700;letter-spacing:0.000px;">15 Lisa</div>
<svg style="left:3117.50px;top:1753.25px;" width="17.30" height="9.30" viewBox="0 0 17.3 9.3" preserveAspectRatio="none"><polygon points="0,0 17.3,0 8.65,9.3" fill="#999"/></svg>
<div style="left:3186.20px;top:1735.45px;width:62.60px;height:53.80px;background:#fdf1d8;border:1.5px solid #2a2226;border-radius:9px;box-sizing:border-box"></div>
<svg style="left:3201.20px;top:1745.85px;" width="31.30" height="31.40" viewBox="0 0 512 512" preserveAspectRatio="none"><path d="M128 0C92.7 0 64 28.7 64 64v96h64V64H354.7L384 93.3V160h64V93.3c0-17-6.7-33.3-18.7-45.3L400 18.7C388 6.7 371.7 0 354.7 0H128zM384 352v32 64H128V384 368 352H384zm64 32h32c17.7 0 32-14.3 32-32V256c0-35.3-28.7-64-64-64H64c-35.3 0-64 28.7-64 64v96c0 17.7 14.3 32 32 32H64v64c0 35.3 28.7 64 64 64H384c35.3 0 64-28.7 64-64V384zM432 248a24 24 0 1 1 0 48 24 24 0 1 1 0-48z" fill="#000"/></svg>
<div style="left:3271.20px;top:1731.15px;width:58.60px;height:53.90px;background:#fff;border:1.7px solid #212529;border-radius:7.5px;box-sizing:border-box"></div>
<div style="left:3286.80px;top:1754.95px;width:6.8px;height:6.8px;border-radius:50%;background:#212529"></div>
<div style="left:3296.60px;top:1754.95px;width:6.8px;height:6.8px;border-radius:50%;background:#212529"></div>
<div style="left:3306.40px;top:1754.95px;width:6.8px;height:6.8px;border-radius:50%;background:#212529"></div>
<div style="left:346.00px;top:1804.90px;width:2991.00px;height:91.40px;background:#93a8a4"></div>
<div style="left:328.00px;top:1804.90px;width:18.00px;height:92.15px;background:#4a88f2"></div>
<div class="t" style="left:378.30px;top:1837.29px;font-size:26px;line-height:26px;color:#000;font-weight:400;letter-spacing:0.000px;">26</div>
<div class="t" style="left:467.50px;top:1837.29px;font-size:26px;line-height:26px;color:#000;font-weight:400;letter-spacing:0.000px;">04:20 PM</div>
<div style="left:613.00px;top:1817.70px;width:316.00px;height:66.00px;background:#fff;border:1.5px solid #ffffff;border-radius:10px;box-sizing:border-box"></div>
<div class="t" style="left:636.50px;top:1836.98px;font-size:29.2px;line-height:29.2px;color:#000;font-weight:400;letter-spacing:0.320px;">Walk-in</div>
<svg style="left:882.60px;top:1844.20px;" width="20.00" height="12.00" viewBox="0 0 20 12" preserveAspectRatio="none"><path d="M1 1.5L9.9 10.2L18.5 1.3" fill="none" stroke="#343a40" stroke-width="2.4"/></svg>
<div class="t" style="left:944.00px;top:1834.61px;font-size:34.6px;line-height:34.6px;color:#000;font-weight:400;letter-spacing:0.000px;">X</div>
<div class="t" style="left:1338.40px;top:1836.02px;font-size:27.5px;line-height:27.5px;color:#000;font-weight:400;letter-spacing:0.553px;">(***) ***-0000</div>
<div style="left:1565.40px;top:1812.40px;width:605.40px;height:76.60px;background:#fff;border:1.5px solid #ffffff;border-radius:10px;box-sizing:border-box"></div>
<div style="left:1580.40px;top:1826.70px;width:175.12px;height:41.80px;background:#fff;border:1.5px solid #212529;border-radius:9px;box-sizing:border-box"></div>
<div class="t" style="left:1599.80px;top:1835.74px;font-size:25.7px;line-height:25.7px;color:#333333;font-weight:700;letter-spacing:0.000px;">Pedicure</div>
<svg style="left:1728.62px;top:1843.10px;" width="13.60" height="13.60" viewBox="0 0 13.6 13.6" preserveAspectRatio="none"><path d="M1.6 1.6L12 12M12 1.6L1.6 12" stroke="#000" stroke-width="3.3" stroke-linecap="butt"/></svg>
<svg style="left:2124.70px;top:1843.90px;" width="17.30" height="9.30" viewBox="0 0 17.3 9.3" preserveAspectRatio="none"><polygon points="0,0 17.3,0 8.65,9.3" fill="#999"/></svg>
<div style="left:2185.60px;top:1812.90px;width:399.00px;height:75.40px;background:#fff;border:1.5px solid #ffffff;border-radius:10px;box-sizing:border-box"></div>
<div class="t" style="left:2201.20px;top:1837.44px;font-size:25.7px;line-height:25.7px;color:#aaaaaa;font-weight:700;letter-spacing:0.125px;">Search or add a tag</div>
<svg style="left:2537.80px;top:1843.90px;" width="17.30" height="9.30" viewBox="0 0 17.3 9.3" preserveAspectRatio="none"><polygon points="0,0 17.3,0 8.65,9.3" fill="#999"/></svg>
<div style="left:2599.30px;top:1815.10px;width:274.30px;height:71.20px;background:#fff;border:1.5px solid #ffffff;border-radius:10px;box-sizing:border-box"></div>
<div class="t" style="left:2623.40px;top:1835.50px;font-size:28px;line-height:28px;color:#2b2b2b;font-weight:700;letter-spacing:0.000px;">Anyone</div>
<svg style="left:2828.00px;top:1845.40px;" width="17.30" height="9.30" viewBox="0 0 17.3 9.3" preserveAspectRatio="none"><polygon points="0,0 17.3,0 8.65,9.3" fill="#999"/></svg>
<div style="left:2889.20px;top:1815.10px;width:274.50px;height:71.20px;background:#fff;border:1.5px solid #ffffff;border-radius:10px;box-sizing:border-box"></div>
<div class="t" style="left:2913.30px;top:1835.50px;font-size:28px;line-height:28px;color:#2b2b2b;font-weight:700;letter-spacing:0.000px;">1 A</div>
<svg style="left:3117.50px;top:1845.40px;" width="17.30" height="9.30" viewBox="0 0 17.3 9.3" preserveAspectRatio="none"><polygon points="0,0 17.3,0 8.65,9.3" fill="#999"/></svg>
<div style="left:3186.20px;top:1827.60px;width:62.60px;height:53.80px;background:#fdf1d8;border:1.5px solid #2a2226;border-radius:9px;box-sizing:border-box"></div>
<svg style="left:3201.20px;top:1838.00px;" width="31.30" height="31.40" viewBox="0 0 512 512" preserveAspectRatio="none"><path d="M128 0C92.7 0 64 28.7 64 64v96h64V64H354.7L384 93.3V160h64V93.3c0-17-6.7-33.3-18.7-45.3L400 18.7C388 6.7 371.7 0 354.7 0H128zM384 352v32 64H128V384 368 352H384zm64 32h32c17.7 0 32-14.3 32-32V256c0-35.3-28.7-64-64-64H64c-35.3 0-64 28.7-64 64v96c0 17.7 14.3 32 32 32H64v64c0 35.3 28.7 64 64 64H384c35.3 0 64-28.7 64-64V384zM432 248a24 24 0 1 1 0 48 24 24 0 1 1 0-48z" fill="#000"/></svg>
<div style="left:3271.20px;top:1823.30px;width:58.60px;height:53.90px;background:transparent;border:1.7px solid #212529;border-radius:7.5px;box-sizing:border-box"></div>
<div style="left:3286.80px;top:1847.10px;width:6.8px;height:6.8px;border-radius:50%;background:#212529"></div>
<div style="left:3296.60px;top:1847.10px;width:6.8px;height:6.8px;border-radius:50%;background:#212529"></div>
<div style="left:3306.40px;top:1847.10px;width:6.8px;height:6.8px;border-radius:50%;background:#212529"></div>
<div style="left:306.00px;top:350.00px;width:22.00px;height:1456.00px;background:#fff"></div>
<div style="left:3338.00px;top:350.00px;width:18.00px;height:1456.00px;background:#fff"></div>
</div>
</body></html>
